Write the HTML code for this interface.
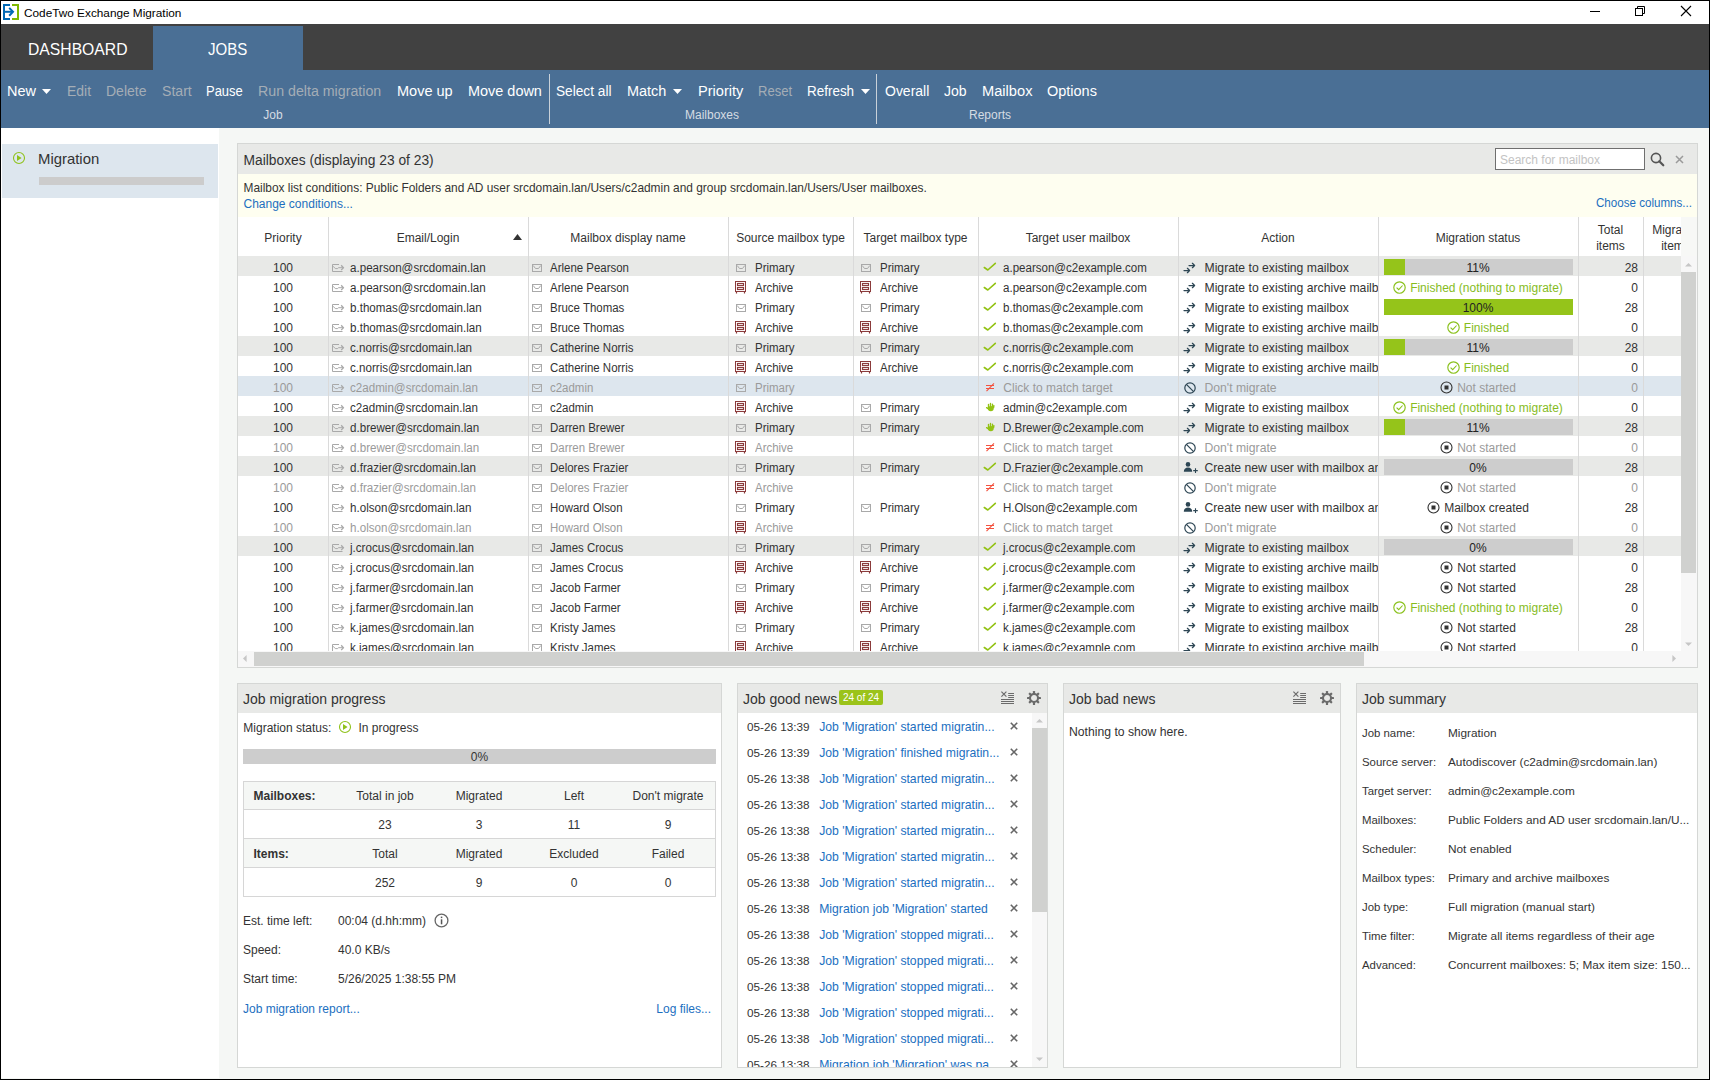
<!DOCTYPE html>
<html><head><meta charset="utf-8"><title>CodeTwo Exchange Migration</title>
<style>
html,body{margin:0;padding:0;width:1710px;height:1080px;overflow:hidden;background:#000}
body{position:relative;font-family:"Liberation Sans", sans-serif}
.r{position:absolute;display:block}
.t{position:absolute;white-space:nowrap;font-family:"Liberation Sans", sans-serif}
svg.r{overflow:visible}
</style></head><body>
<div class="r" style="left:0px;top:0px;width:1710px;height:1080px;background:#000;"></div><div class="r" style="left:1px;top:1px;width:1708px;height:1078px;background:#f5f7f5;"></div><div class="r" style="left:1px;top:1px;width:1708px;height:23px;background:#ffffff;"></div><svg class="r" style="left:0px;top:0px;" width="22" height="22" viewBox="0 0 22 22"><path d="M10 4H3V20H10V18H5V6H10Z" fill="#0068b4"/><path d="M5 11.8H12.6" stroke="#0068b4" stroke-width="2"/><path d="M9.2 7.9L13 11.8L9.2 15.7" stroke="#0068b4" stroke-width="2" fill="none"/><path d="M12 4H19V20H12V18H17V6H12Z" fill="#7fb800"/></svg><div class="t" style="left:24px;top:3px;font-size:11.8px;line-height:20px;color:#000;">CodeTwo Exchange Migration</div><div class="r" style="left:1590px;top:11px;width:10px;height:1px;background:#000;"></div><svg class="r" style="left:1634px;top:5px;" width="13" height="13" viewBox="0 0 13 13"><rect x="1.5" y="3.5" width="7" height="7" fill="none" stroke="#000"/><path d="M3.5 3.5V1.5H10.5V8.5H8.5" fill="none" stroke="#000"/></svg><svg class="r" style="left:1680px;top:5px;" width="12" height="12" viewBox="0 0 12 12"><path d="M1 1L11 11M11 1L1 11" stroke="#000" stroke-width="1.1"/></svg><div class="r" style="left:1px;top:24px;width:1708px;height:46px;background:#414141;"></div><div class="t" style="left:28.2px;top:39px;font-size:16.5px;line-height:20px;color:#ffffff;transform:scaleX(0.9519);transform-origin:0 0">DASHBOARD</div><div class="r" style="left:153px;top:26px;width:150px;height:44px;background:#4a6f95;"></div><div class="t" style="left:208px;top:39px;font-size:16.5px;line-height:20px;color:#ffffff;transform:scaleX(0.9116);transform-origin:0 0">JOBS</div><div class="r" style="left:1px;top:70px;width:1708px;height:58px;background:#4a6f95;"></div><div class="t" style="left:6.5px;top:81px;font-size:14px;line-height:20px;color:#ffffff;transform:scaleX(1.0351);transform-origin:0 0">New</div><div class="t" style="left:66.5px;top:81px;font-size:14px;line-height:20px;color:#a4adb6;transform:scaleX(0.9948);transform-origin:0 0">Edit</div><div class="t" style="left:106px;top:81px;font-size:14px;line-height:20px;color:#a4adb6;transform:scaleX(1.0008);transform-origin:0 0">Delete</div><div class="t" style="left:161.5px;top:81px;font-size:14px;line-height:20px;color:#a4adb6;transform:scaleX(1.0075);transform-origin:0 0">Start</div><div class="t" style="left:206px;top:81px;font-size:14px;line-height:20px;color:#ffffff;transform:scaleX(0.9269);transform-origin:0 0">Pause</div><div class="t" style="left:258px;top:81px;font-size:14px;line-height:20px;color:#a4adb6;transform:scaleX(1.0148);transform-origin:0 0">Run delta migration</div><div class="t" style="left:396.5px;top:81px;font-size:14px;line-height:20px;color:#ffffff;transform:scaleX(1.0372);transform-origin:0 0">Move up</div><div class="t" style="left:467.5px;top:81px;font-size:14px;line-height:20px;color:#ffffff;transform:scaleX(1.0322);transform-origin:0 0">Move down</div><div class="t" style="left:556.2px;top:81px;font-size:14px;line-height:20px;color:#ffffff;transform:scaleX(0.9769);transform-origin:0 0">Select all</div><div class="t" style="left:626.7px;top:81px;font-size:14px;line-height:20px;color:#ffffff;transform:scaleX(1.0334);transform-origin:0 0">Match</div><div class="t" style="left:697.6px;top:81px;font-size:14px;line-height:20px;color:#ffffff;transform:scaleX(1.0422);transform-origin:0 0">Priority</div><div class="t" style="left:757.6px;top:81px;font-size:14px;line-height:20px;color:#a4adb6;transform:scaleX(0.9323);transform-origin:0 0">Reset</div><div class="t" style="left:806.7px;top:81px;font-size:14px;line-height:20px;color:#ffffff;transform:scaleX(0.9606);transform-origin:0 0">Refresh</div><div class="t" style="left:884.6px;top:81px;font-size:14px;line-height:20px;color:#ffffff;transform:scaleX(0.9987);transform-origin:0 0">Overall</div><div class="t" style="left:943.7px;top:81px;font-size:14px;line-height:20px;color:#ffffff;transform:scaleX(1.0010);transform-origin:0 0">Job</div><div class="t" style="left:981.6px;top:81px;font-size:14px;line-height:20px;color:#ffffff;transform:scaleX(1.0466);transform-origin:0 0">Mailbox</div><div class="t" style="left:1046.9px;top:81px;font-size:14px;line-height:20px;color:#ffffff;transform:scaleX(1.0342);transform-origin:0 0">Options</div><svg class="r" style="left:42px;top:89px;" width="9" height="5" viewBox="0 0 9 5"><path d="M0 0h9L4.5 5z" fill="#fff"/></svg><svg class="r" style="left:673px;top:89px;" width="9" height="5" viewBox="0 0 9 5"><path d="M0 0h9L4.5 5z" fill="#fff"/></svg><svg class="r" style="left:861px;top:89px;" width="9" height="5" viewBox="0 0 9 5"><path d="M0 0h9L4.5 5z" fill="#fff"/></svg><div class="r" style="left:549px;top:74px;width:1px;height:50px;background:#c9d1d9;"></div><div class="r" style="left:876px;top:74px;width:1px;height:50px;background:#c9d1d9;"></div><div class="t" style="left:233px;top:105px;font-size:12px;line-height:20px;color:#d5dce3;width:80px;text-align:center;">Job</div><div class="t" style="left:662px;top:105px;font-size:12px;line-height:20px;color:#d5dce3;width:100px;text-align:center;">Mailboxes</div><div class="t" style="left:940px;top:105px;font-size:12px;line-height:20px;color:#d5dce3;width:100px;text-align:center;">Reports</div><div class="r" style="left:1px;top:128px;width:218px;height:950px;background:#ffffff;"></div><div class="r" style="left:2px;top:144px;width:216px;height:54px;background:#dde6ee;"></div><svg class="r" style="left:12px;top:151px;" width="14" height="14" viewBox="0 0 14 14"><circle cx="7" cy="7" r="5.5" fill="none" stroke="#8fc21b" stroke-width="1.1"/><path d="M5 3.9V9.9L9.6 6.9z" fill="#8fc21b"/></svg><div class="t" style="left:37.5px;top:149px;font-size:14.5px;line-height:20px;color:#333333;transform:scaleX(1.0261);transform-origin:0 0">Migration</div><div class="r" style="left:39px;top:177px;width:165px;height:8px;background:#cccccc;"></div><div class="r" style="left:237px;top:143px;width:1461px;height:525px;background:#d5d7d5;"></div><div class="r" style="left:238px;top:144px;width:1459px;height:523px;background:#ffffff;"></div><div class="r" style="left:238px;top:144px;width:1459px;height:30px;background:#e8e9e7;"></div><div class="t" style="left:243.5px;top:151px;font-size:13.8px;line-height:20px;color:#333333;">Mailboxes (displaying 23 of 23)</div><div class="r" style="left:1495px;top:148px;width:150px;height:22px;background:#6f6f6f;"></div><div class="r" style="left:1496px;top:149px;width:148px;height:20px;background:#ffffff;"></div><div class="t" style="left:1500px;top:150px;font-size:12px;line-height:20px;color:#c3c3c3;">Search for mailbox</div><svg class="r" style="left:1650px;top:152px;" width="15" height="15" viewBox="0 0 15 15"><circle cx="6" cy="6" r="4.6" fill="none" stroke="#555" stroke-width="1.6"/><path d="M9.3 9.3l4 4" stroke="#555" stroke-width="2.2" stroke-linecap="round"/></svg><svg class="r" style="left:1675px;top:155px;" width="9" height="9" viewBox="0 0 9 9"><path d="M1 1l7 7M8 1L1 8" stroke="#9a9a9a" stroke-width="1.5"/></svg><div class="r" style="left:238px;top:174px;width:1459px;height:43px;background:#fefef0;"></div><div class="t" style="left:243.5px;top:178px;font-size:11.9px;line-height:20px;color:#333333;">Mailbox list conditions: Public Folders and AD user srcdomain.lan/Users/c2admin and group srcdomain.lan/Users/User mailboxes.</div><div class="t" style="left:243.5px;top:194px;font-size:12px;line-height:20px;color:#1c6fbf;">Change conditions...</div><div class="t" style="left:1595.5px;top:193px;font-size:12px;line-height:20px;color:#1c6fbf;transform:scaleX(0.9659);transform-origin:0 0">Choose columns...</div><div class="r" style="left:238px;top:217px;width:1443px;height:434px;overflow:hidden"><div class="r" style="left:0px;top:0px;width:1443px;height:39px;background:#ffffff;"></div><div class="t" style="left:0px;top:11px;font-size:12px;line-height:20px;color:#333333;width:90px;text-align:center;">Priority</div><div class="t" style="left:90px;top:11px;font-size:12px;line-height:20px;color:#333333;width:200px;text-align:center;">Email/Login</div><div class="t" style="left:290px;top:11px;font-size:12px;line-height:20px;color:#333333;width:200px;text-align:center;">Mailbox display name</div><div class="t" style="left:490px;top:11px;font-size:12px;line-height:20px;color:#333333;width:125px;text-align:center;">Source mailbox type</div><div class="t" style="left:615px;top:11px;font-size:12px;line-height:20px;color:#333333;width:125px;text-align:center;">Target mailbox type</div><div class="t" style="left:740px;top:11px;font-size:12px;line-height:20px;color:#333333;width:200px;text-align:center;">Target user mailbox</div><div class="t" style="left:940px;top:11px;font-size:12px;line-height:20px;color:#333333;width:200px;text-align:center;">Action</div><div class="t" style="left:1140px;top:11px;font-size:12px;line-height:20px;color:#333333;width:200px;text-align:center;">Migration status</div><div class="t" style="left:1340px;top:3px;font-size:12px;line-height:20px;color:#333333;width:65px;text-align:center;">Total</div><div class="t" style="left:1340px;top:19px;font-size:12px;line-height:20px;color:#333333;width:65px;text-align:center;">items</div><div class="t" style="left:1405px;top:3px;font-size:12px;line-height:20px;color:#333333;width:65px;text-align:center;">Migrated</div><div class="t" style="left:1405px;top:19px;font-size:12px;line-height:20px;color:#333333;width:65px;text-align:center;">items</div><svg class="r" style="left:275px;top:17px;" width="9" height="6" viewBox="0 0 9 6"><path d="M0 6h9L4.5 0z" fill="#333"/></svg><div class="r" style="left:0px;top:39px;width:1443px;height:20px;background:#e8e9e7;"></div><div class="t" style="left:0px;top:41px;font-size:12px;line-height:20px;color:#333333;width:90px;text-align:center;">100</div><svg class="r" style="left:94px;top:47px;" width="13" height="9" viewBox="0 0 13 9"><path d="M7 0.5H0.5v7h10" fill="none" stroke="#a9a9a9"/><path d="M1 2.2l2.3 2.4h2.3l0.8-0.9h5" fill="none" stroke="#a9a9a9"/><path d="M9.2 1.3l2.2 2.4-2.2 2.4" fill="none" stroke="#a9a9a9" stroke-width="1.3"/></svg><div class="t" style="left:112px;top:41px;font-size:12px;line-height:20px;color:#333333;transform:scaleX(0.967);transform-origin:0 0;">a.pearson@srcdomain.lan</div><svg class="r" style="left:294px;top:47px;" width="11" height="9" viewBox="0 0 11 9"><rect x="0.5" y="0.5" width="9" height="7" fill="none" stroke="#a9a9a9"/><path d="M1.2 1.5L3.5 4.5H6.5L8.8 1.5" fill="none" stroke="#a9a9a9"/></svg><div class="t" style="left:312px;top:41px;font-size:12px;line-height:20px;color:#333333;transform:scaleX(0.955);transform-origin:0 0;">Arlene Pearson</div><svg class="r" style="left:498px;top:47px;" width="11" height="9" viewBox="0 0 11 9"><rect x="0.5" y="0.5" width="9" height="7" fill="none" stroke="#a9a9a9"/><path d="M1.2 1.5L3.5 4.5H6.5L8.8 1.5" fill="none" stroke="#a9a9a9"/></svg><div class="t" style="left:516.5px;top:41px;font-size:12px;line-height:20px;color:#333333;transform:scaleX(0.955);transform-origin:0 0;">Primary</div><svg class="r" style="left:623px;top:47px;" width="11" height="9" viewBox="0 0 11 9"><rect x="0.5" y="0.5" width="9" height="7" fill="none" stroke="#a9a9a9"/><path d="M1.2 1.5L3.5 4.5H6.5L8.8 1.5" fill="none" stroke="#a9a9a9"/></svg><div class="t" style="left:641.5px;top:41px;font-size:12px;line-height:20px;color:#333333;transform:scaleX(0.955);transform-origin:0 0;">Primary</div><svg class="r" style="left:745px;top:45px;" width="14" height="10" viewBox="0 0 14 10"><path d="M1.3 5.5L4.8 8L12.3 1.3" fill="none" stroke="#92c213" stroke-width="1.6" stroke-linecap="round" stroke-linejoin="round"/></svg><div class="t" style="left:765.3px;top:41px;font-size:12px;line-height:20px;color:#333333;transform:scaleX(0.962);transform-origin:0 0;">a.pearson@c2example.com</div><div class="r" style="left:940px;top:39px;width:200px;height:20px;overflow:hidden"><svg class="r" style="left:5px;top:6px;" width="13" height="12" viewBox="0 0 13 12"><path d="M6 3.5H11.6M9.4 1.3L11.6 3.5L9.4 5.7M1 8.5H6.6M4.4 6.3L6.6 8.5L4.4 10.7" fill="none" stroke="#2d4654" stroke-width="1.25" stroke-linecap="round" stroke-linejoin="round"/></svg><div class="t" style="left:26.5px;top:2px;font-size:12.2px;line-height:20px;color:#333333;white-space:nowrap;">Migrate to existing mailbox</div></div><div class="r" style="left:1146px;top:42px;width:189px;height:16px;background:#cdcdcd;"></div><div class="r" style="left:1146px;top:42px;width:21px;height:16px;background:#95c41a;"></div><div class="t" style="left:1140px;top:41px;font-size:12px;line-height:20px;color:#222;width:200px;text-align:center;">11%</div><div class="t" style="left:1340px;top:41px;font-size:12px;line-height:20px;color:#333333;width:60px;text-align:right;">28</div><div class="t" style="left:0px;top:61px;font-size:12px;line-height:20px;color:#333333;width:90px;text-align:center;">100</div><svg class="r" style="left:94px;top:67px;" width="13" height="9" viewBox="0 0 13 9"><path d="M7 0.5H0.5v7h10" fill="none" stroke="#a9a9a9"/><path d="M1 2.2l2.3 2.4h2.3l0.8-0.9h5" fill="none" stroke="#a9a9a9"/><path d="M9.2 1.3l2.2 2.4-2.2 2.4" fill="none" stroke="#a9a9a9" stroke-width="1.3"/></svg><div class="t" style="left:112px;top:61px;font-size:12px;line-height:20px;color:#333333;transform:scaleX(0.967);transform-origin:0 0;">a.pearson@srcdomain.lan</div><svg class="r" style="left:294px;top:67px;" width="11" height="9" viewBox="0 0 11 9"><rect x="0.5" y="0.5" width="9" height="7" fill="none" stroke="#a9a9a9"/><path d="M1.2 1.5L3.5 4.5H6.5L8.8 1.5" fill="none" stroke="#a9a9a9"/></svg><div class="t" style="left:312px;top:61px;font-size:12px;line-height:20px;color:#333333;transform:scaleX(0.955);transform-origin:0 0;">Arlene Pearson</div><svg class="r" style="left:497px;top:64px;" width="11" height="13" viewBox="0 0 11 13"><rect x="0.5" y="0.5" width="10" height="10" fill="none" stroke="#8b3b3b" stroke-width="1"/><rect x="2.5" y="2.5" width="6" height="2" fill="none" stroke="#8b3b3b" stroke-width="1.15"/><rect x="2.5" y="6.5" width="6" height="2" fill="none" stroke="#8b3b3b" stroke-width="1.15"/><path d="M1.5 11V12.6M9.5 11V12.6" stroke="#8b3b3b" stroke-width="1.2"/></svg><div class="t" style="left:516.5px;top:61px;font-size:12px;line-height:20px;color:#333333;transform:scaleX(0.955);transform-origin:0 0;">Archive</div><svg class="r" style="left:622px;top:64px;" width="11" height="13" viewBox="0 0 11 13"><rect x="0.5" y="0.5" width="10" height="10" fill="none" stroke="#8b3b3b" stroke-width="1"/><rect x="2.5" y="2.5" width="6" height="2" fill="none" stroke="#8b3b3b" stroke-width="1.15"/><rect x="2.5" y="6.5" width="6" height="2" fill="none" stroke="#8b3b3b" stroke-width="1.15"/><path d="M1.5 11V12.6M9.5 11V12.6" stroke="#8b3b3b" stroke-width="1.2"/></svg><div class="t" style="left:641.5px;top:61px;font-size:12px;line-height:20px;color:#333333;transform:scaleX(0.955);transform-origin:0 0;">Archive</div><svg class="r" style="left:745px;top:65px;" width="14" height="10" viewBox="0 0 14 10"><path d="M1.3 5.5L4.8 8L12.3 1.3" fill="none" stroke="#92c213" stroke-width="1.6" stroke-linecap="round" stroke-linejoin="round"/></svg><div class="t" style="left:765.3px;top:61px;font-size:12px;line-height:20px;color:#333333;transform:scaleX(0.962);transform-origin:0 0;">a.pearson@c2example.com</div><div class="r" style="left:940px;top:59px;width:200px;height:20px;overflow:hidden"><svg class="r" style="left:5px;top:6px;" width="13" height="12" viewBox="0 0 13 12"><path d="M6 3.5H11.6M9.4 1.3L11.6 3.5L9.4 5.7M1 8.5H6.6M4.4 6.3L6.6 8.5L4.4 10.7" fill="none" stroke="#2d4654" stroke-width="1.25" stroke-linecap="round" stroke-linejoin="round"/></svg><div class="t" style="left:26.5px;top:2px;font-size:12.2px;line-height:20px;color:#333333;white-space:nowrap;">Migrate to existing archive mailb</div></div><div class="r" style="left:1140px;top:59px;width:200px;height:20px;display:flex;justify-content:center;align-items:center"><svg width="13" height="13" viewBox="0 0 13 13" style="margin-right:4px;margin-top:2px"><circle cx="6.5" cy="6.5" r="5.7" fill="none" stroke="#8ac11d" stroke-width="1.15"/><path d="M3.6 6.6l2.1 2.1 3.9-4.2" fill="none" stroke="#8ac11d" stroke-width="1.1"/></svg><span style="font-size:12px;color:#86bc1e;line-height:20px;padding-top:4px">Finished (nothing to migrate)</span></div><div class="t" style="left:1340px;top:61px;font-size:12px;line-height:20px;color:#333333;width:60px;text-align:right;">0</div><div class="t" style="left:0px;top:81px;font-size:12px;line-height:20px;color:#333333;width:90px;text-align:center;">100</div><svg class="r" style="left:94px;top:87px;" width="13" height="9" viewBox="0 0 13 9"><path d="M7 0.5H0.5v7h10" fill="none" stroke="#a9a9a9"/><path d="M1 2.2l2.3 2.4h2.3l0.8-0.9h5" fill="none" stroke="#a9a9a9"/><path d="M9.2 1.3l2.2 2.4-2.2 2.4" fill="none" stroke="#a9a9a9" stroke-width="1.3"/></svg><div class="t" style="left:112px;top:81px;font-size:12px;line-height:20px;color:#333333;transform:scaleX(0.967);transform-origin:0 0;">b.thomas@srcdomain.lan</div><svg class="r" style="left:294px;top:87px;" width="11" height="9" viewBox="0 0 11 9"><rect x="0.5" y="0.5" width="9" height="7" fill="none" stroke="#a9a9a9"/><path d="M1.2 1.5L3.5 4.5H6.5L8.8 1.5" fill="none" stroke="#a9a9a9"/></svg><div class="t" style="left:312px;top:81px;font-size:12px;line-height:20px;color:#333333;transform:scaleX(0.955);transform-origin:0 0;">Bruce Thomas</div><svg class="r" style="left:498px;top:87px;" width="11" height="9" viewBox="0 0 11 9"><rect x="0.5" y="0.5" width="9" height="7" fill="none" stroke="#a9a9a9"/><path d="M1.2 1.5L3.5 4.5H6.5L8.8 1.5" fill="none" stroke="#a9a9a9"/></svg><div class="t" style="left:516.5px;top:81px;font-size:12px;line-height:20px;color:#333333;transform:scaleX(0.955);transform-origin:0 0;">Primary</div><svg class="r" style="left:623px;top:87px;" width="11" height="9" viewBox="0 0 11 9"><rect x="0.5" y="0.5" width="9" height="7" fill="none" stroke="#a9a9a9"/><path d="M1.2 1.5L3.5 4.5H6.5L8.8 1.5" fill="none" stroke="#a9a9a9"/></svg><div class="t" style="left:641.5px;top:81px;font-size:12px;line-height:20px;color:#333333;transform:scaleX(0.955);transform-origin:0 0;">Primary</div><svg class="r" style="left:745px;top:85px;" width="14" height="10" viewBox="0 0 14 10"><path d="M1.3 5.5L4.8 8L12.3 1.3" fill="none" stroke="#92c213" stroke-width="1.6" stroke-linecap="round" stroke-linejoin="round"/></svg><div class="t" style="left:765.3px;top:81px;font-size:12px;line-height:20px;color:#333333;transform:scaleX(0.962);transform-origin:0 0;">b.thomas@c2example.com</div><div class="r" style="left:940px;top:79px;width:200px;height:20px;overflow:hidden"><svg class="r" style="left:5px;top:6px;" width="13" height="12" viewBox="0 0 13 12"><path d="M6 3.5H11.6M9.4 1.3L11.6 3.5L9.4 5.7M1 8.5H6.6M4.4 6.3L6.6 8.5L4.4 10.7" fill="none" stroke="#2d4654" stroke-width="1.25" stroke-linecap="round" stroke-linejoin="round"/></svg><div class="t" style="left:26.5px;top:2px;font-size:12.2px;line-height:20px;color:#333333;white-space:nowrap;">Migrate to existing mailbox</div></div><div class="r" style="left:1146px;top:82px;width:189px;height:16px;background:#cdcdcd;"></div><div class="r" style="left:1146px;top:82px;width:189px;height:16px;background:#95c41a;"></div><div class="t" style="left:1140px;top:81px;font-size:12px;line-height:20px;color:#222;width:200px;text-align:center;">100%</div><div class="t" style="left:1340px;top:81px;font-size:12px;line-height:20px;color:#333333;width:60px;text-align:right;">28</div><div class="t" style="left:0px;top:101px;font-size:12px;line-height:20px;color:#333333;width:90px;text-align:center;">100</div><svg class="r" style="left:94px;top:107px;" width="13" height="9" viewBox="0 0 13 9"><path d="M7 0.5H0.5v7h10" fill="none" stroke="#a9a9a9"/><path d="M1 2.2l2.3 2.4h2.3l0.8-0.9h5" fill="none" stroke="#a9a9a9"/><path d="M9.2 1.3l2.2 2.4-2.2 2.4" fill="none" stroke="#a9a9a9" stroke-width="1.3"/></svg><div class="t" style="left:112px;top:101px;font-size:12px;line-height:20px;color:#333333;transform:scaleX(0.967);transform-origin:0 0;">b.thomas@srcdomain.lan</div><svg class="r" style="left:294px;top:107px;" width="11" height="9" viewBox="0 0 11 9"><rect x="0.5" y="0.5" width="9" height="7" fill="none" stroke="#a9a9a9"/><path d="M1.2 1.5L3.5 4.5H6.5L8.8 1.5" fill="none" stroke="#a9a9a9"/></svg><div class="t" style="left:312px;top:101px;font-size:12px;line-height:20px;color:#333333;transform:scaleX(0.955);transform-origin:0 0;">Bruce Thomas</div><svg class="r" style="left:497px;top:104px;" width="11" height="13" viewBox="0 0 11 13"><rect x="0.5" y="0.5" width="10" height="10" fill="none" stroke="#8b3b3b" stroke-width="1"/><rect x="2.5" y="2.5" width="6" height="2" fill="none" stroke="#8b3b3b" stroke-width="1.15"/><rect x="2.5" y="6.5" width="6" height="2" fill="none" stroke="#8b3b3b" stroke-width="1.15"/><path d="M1.5 11V12.6M9.5 11V12.6" stroke="#8b3b3b" stroke-width="1.2"/></svg><div class="t" style="left:516.5px;top:101px;font-size:12px;line-height:20px;color:#333333;transform:scaleX(0.955);transform-origin:0 0;">Archive</div><svg class="r" style="left:622px;top:104px;" width="11" height="13" viewBox="0 0 11 13"><rect x="0.5" y="0.5" width="10" height="10" fill="none" stroke="#8b3b3b" stroke-width="1"/><rect x="2.5" y="2.5" width="6" height="2" fill="none" stroke="#8b3b3b" stroke-width="1.15"/><rect x="2.5" y="6.5" width="6" height="2" fill="none" stroke="#8b3b3b" stroke-width="1.15"/><path d="M1.5 11V12.6M9.5 11V12.6" stroke="#8b3b3b" stroke-width="1.2"/></svg><div class="t" style="left:641.5px;top:101px;font-size:12px;line-height:20px;color:#333333;transform:scaleX(0.955);transform-origin:0 0;">Archive</div><svg class="r" style="left:745px;top:105px;" width="14" height="10" viewBox="0 0 14 10"><path d="M1.3 5.5L4.8 8L12.3 1.3" fill="none" stroke="#92c213" stroke-width="1.6" stroke-linecap="round" stroke-linejoin="round"/></svg><div class="t" style="left:765.3px;top:101px;font-size:12px;line-height:20px;color:#333333;transform:scaleX(0.962);transform-origin:0 0;">b.thomas@c2example.com</div><div class="r" style="left:940px;top:99px;width:200px;height:20px;overflow:hidden"><svg class="r" style="left:5px;top:6px;" width="13" height="12" viewBox="0 0 13 12"><path d="M6 3.5H11.6M9.4 1.3L11.6 3.5L9.4 5.7M1 8.5H6.6M4.4 6.3L6.6 8.5L4.4 10.7" fill="none" stroke="#2d4654" stroke-width="1.25" stroke-linecap="round" stroke-linejoin="round"/></svg><div class="t" style="left:26.5px;top:2px;font-size:12.2px;line-height:20px;color:#333333;white-space:nowrap;">Migrate to existing archive mailb</div></div><div class="r" style="left:1140px;top:99px;width:200px;height:20px;display:flex;justify-content:center;align-items:center"><svg width="13" height="13" viewBox="0 0 13 13" style="margin-right:4px;margin-top:2px"><circle cx="6.5" cy="6.5" r="5.7" fill="none" stroke="#8ac11d" stroke-width="1.15"/><path d="M3.6 6.6l2.1 2.1 3.9-4.2" fill="none" stroke="#8ac11d" stroke-width="1.1"/></svg><span style="font-size:12px;color:#86bc1e;line-height:20px;padding-top:4px">Finished</span></div><div class="t" style="left:1340px;top:101px;font-size:12px;line-height:20px;color:#333333;width:60px;text-align:right;">0</div><div class="r" style="left:0px;top:119px;width:1443px;height:20px;background:#e8e9e7;"></div><div class="t" style="left:0px;top:121px;font-size:12px;line-height:20px;color:#333333;width:90px;text-align:center;">100</div><svg class="r" style="left:94px;top:127px;" width="13" height="9" viewBox="0 0 13 9"><path d="M7 0.5H0.5v7h10" fill="none" stroke="#a9a9a9"/><path d="M1 2.2l2.3 2.4h2.3l0.8-0.9h5" fill="none" stroke="#a9a9a9"/><path d="M9.2 1.3l2.2 2.4-2.2 2.4" fill="none" stroke="#a9a9a9" stroke-width="1.3"/></svg><div class="t" style="left:112px;top:121px;font-size:12px;line-height:20px;color:#333333;transform:scaleX(0.967);transform-origin:0 0;">c.norris@srcdomain.lan</div><svg class="r" style="left:294px;top:127px;" width="11" height="9" viewBox="0 0 11 9"><rect x="0.5" y="0.5" width="9" height="7" fill="none" stroke="#a9a9a9"/><path d="M1.2 1.5L3.5 4.5H6.5L8.8 1.5" fill="none" stroke="#a9a9a9"/></svg><div class="t" style="left:312px;top:121px;font-size:12px;line-height:20px;color:#333333;transform:scaleX(0.955);transform-origin:0 0;">Catherine Norris</div><svg class="r" style="left:498px;top:127px;" width="11" height="9" viewBox="0 0 11 9"><rect x="0.5" y="0.5" width="9" height="7" fill="none" stroke="#a9a9a9"/><path d="M1.2 1.5L3.5 4.5H6.5L8.8 1.5" fill="none" stroke="#a9a9a9"/></svg><div class="t" style="left:516.5px;top:121px;font-size:12px;line-height:20px;color:#333333;transform:scaleX(0.955);transform-origin:0 0;">Primary</div><svg class="r" style="left:623px;top:127px;" width="11" height="9" viewBox="0 0 11 9"><rect x="0.5" y="0.5" width="9" height="7" fill="none" stroke="#a9a9a9"/><path d="M1.2 1.5L3.5 4.5H6.5L8.8 1.5" fill="none" stroke="#a9a9a9"/></svg><div class="t" style="left:641.5px;top:121px;font-size:12px;line-height:20px;color:#333333;transform:scaleX(0.955);transform-origin:0 0;">Primary</div><svg class="r" style="left:745px;top:125px;" width="14" height="10" viewBox="0 0 14 10"><path d="M1.3 5.5L4.8 8L12.3 1.3" fill="none" stroke="#92c213" stroke-width="1.6" stroke-linecap="round" stroke-linejoin="round"/></svg><div class="t" style="left:765.3px;top:121px;font-size:12px;line-height:20px;color:#333333;transform:scaleX(0.962);transform-origin:0 0;">c.norris@c2example.com</div><div class="r" style="left:940px;top:119px;width:200px;height:20px;overflow:hidden"><svg class="r" style="left:5px;top:6px;" width="13" height="12" viewBox="0 0 13 12"><path d="M6 3.5H11.6M9.4 1.3L11.6 3.5L9.4 5.7M1 8.5H6.6M4.4 6.3L6.6 8.5L4.4 10.7" fill="none" stroke="#2d4654" stroke-width="1.25" stroke-linecap="round" stroke-linejoin="round"/></svg><div class="t" style="left:26.5px;top:2px;font-size:12.2px;line-height:20px;color:#333333;white-space:nowrap;">Migrate to existing mailbox</div></div><div class="r" style="left:1146px;top:122px;width:189px;height:16px;background:#cdcdcd;"></div><div class="r" style="left:1146px;top:122px;width:21px;height:16px;background:#95c41a;"></div><div class="t" style="left:1140px;top:121px;font-size:12px;line-height:20px;color:#222;width:200px;text-align:center;">11%</div><div class="t" style="left:1340px;top:121px;font-size:12px;line-height:20px;color:#333333;width:60px;text-align:right;">28</div><div class="t" style="left:0px;top:141px;font-size:12px;line-height:20px;color:#333333;width:90px;text-align:center;">100</div><svg class="r" style="left:94px;top:147px;" width="13" height="9" viewBox="0 0 13 9"><path d="M7 0.5H0.5v7h10" fill="none" stroke="#a9a9a9"/><path d="M1 2.2l2.3 2.4h2.3l0.8-0.9h5" fill="none" stroke="#a9a9a9"/><path d="M9.2 1.3l2.2 2.4-2.2 2.4" fill="none" stroke="#a9a9a9" stroke-width="1.3"/></svg><div class="t" style="left:112px;top:141px;font-size:12px;line-height:20px;color:#333333;transform:scaleX(0.967);transform-origin:0 0;">c.norris@srcdomain.lan</div><svg class="r" style="left:294px;top:147px;" width="11" height="9" viewBox="0 0 11 9"><rect x="0.5" y="0.5" width="9" height="7" fill="none" stroke="#a9a9a9"/><path d="M1.2 1.5L3.5 4.5H6.5L8.8 1.5" fill="none" stroke="#a9a9a9"/></svg><div class="t" style="left:312px;top:141px;font-size:12px;line-height:20px;color:#333333;transform:scaleX(0.955);transform-origin:0 0;">Catherine Norris</div><svg class="r" style="left:497px;top:144px;" width="11" height="13" viewBox="0 0 11 13"><rect x="0.5" y="0.5" width="10" height="10" fill="none" stroke="#8b3b3b" stroke-width="1"/><rect x="2.5" y="2.5" width="6" height="2" fill="none" stroke="#8b3b3b" stroke-width="1.15"/><rect x="2.5" y="6.5" width="6" height="2" fill="none" stroke="#8b3b3b" stroke-width="1.15"/><path d="M1.5 11V12.6M9.5 11V12.6" stroke="#8b3b3b" stroke-width="1.2"/></svg><div class="t" style="left:516.5px;top:141px;font-size:12px;line-height:20px;color:#333333;transform:scaleX(0.955);transform-origin:0 0;">Archive</div><svg class="r" style="left:622px;top:144px;" width="11" height="13" viewBox="0 0 11 13"><rect x="0.5" y="0.5" width="10" height="10" fill="none" stroke="#8b3b3b" stroke-width="1"/><rect x="2.5" y="2.5" width="6" height="2" fill="none" stroke="#8b3b3b" stroke-width="1.15"/><rect x="2.5" y="6.5" width="6" height="2" fill="none" stroke="#8b3b3b" stroke-width="1.15"/><path d="M1.5 11V12.6M9.5 11V12.6" stroke="#8b3b3b" stroke-width="1.2"/></svg><div class="t" style="left:641.5px;top:141px;font-size:12px;line-height:20px;color:#333333;transform:scaleX(0.955);transform-origin:0 0;">Archive</div><svg class="r" style="left:745px;top:145px;" width="14" height="10" viewBox="0 0 14 10"><path d="M1.3 5.5L4.8 8L12.3 1.3" fill="none" stroke="#92c213" stroke-width="1.6" stroke-linecap="round" stroke-linejoin="round"/></svg><div class="t" style="left:765.3px;top:141px;font-size:12px;line-height:20px;color:#333333;transform:scaleX(0.962);transform-origin:0 0;">c.norris@c2example.com</div><div class="r" style="left:940px;top:139px;width:200px;height:20px;overflow:hidden"><svg class="r" style="left:5px;top:6px;" width="13" height="12" viewBox="0 0 13 12"><path d="M6 3.5H11.6M9.4 1.3L11.6 3.5L9.4 5.7M1 8.5H6.6M4.4 6.3L6.6 8.5L4.4 10.7" fill="none" stroke="#2d4654" stroke-width="1.25" stroke-linecap="round" stroke-linejoin="round"/></svg><div class="t" style="left:26.5px;top:2px;font-size:12.2px;line-height:20px;color:#333333;white-space:nowrap;">Migrate to existing archive mailb</div></div><div class="r" style="left:1140px;top:139px;width:200px;height:20px;display:flex;justify-content:center;align-items:center"><svg width="13" height="13" viewBox="0 0 13 13" style="margin-right:4px;margin-top:2px"><circle cx="6.5" cy="6.5" r="5.7" fill="none" stroke="#8ac11d" stroke-width="1.15"/><path d="M3.6 6.6l2.1 2.1 3.9-4.2" fill="none" stroke="#8ac11d" stroke-width="1.1"/></svg><span style="font-size:12px;color:#86bc1e;line-height:20px;padding-top:4px">Finished</span></div><div class="t" style="left:1340px;top:141px;font-size:12px;line-height:20px;color:#333333;width:60px;text-align:right;">0</div><div class="r" style="left:0px;top:159px;width:1443px;height:20px;background:#dde6ee;"></div><div class="t" style="left:0px;top:161px;font-size:12px;line-height:20px;color:#9a9a9a;width:90px;text-align:center;">100</div><svg class="r" style="left:94px;top:167px;" width="13" height="9" viewBox="0 0 13 9"><path d="M7 0.5H0.5v7h10" fill="none" stroke="#a9a9a9"/><path d="M1 2.2l2.3 2.4h2.3l0.8-0.9h5" fill="none" stroke="#a9a9a9"/><path d="M9.2 1.3l2.2 2.4-2.2 2.4" fill="none" stroke="#a9a9a9" stroke-width="1.3"/></svg><div class="t" style="left:112px;top:161px;font-size:12px;line-height:20px;color:#9a9a9a;transform:scaleX(0.967);transform-origin:0 0;">c2admin@srcdomain.lan</div><svg class="r" style="left:294px;top:167px;" width="11" height="9" viewBox="0 0 11 9"><rect x="0.5" y="0.5" width="9" height="7" fill="none" stroke="#a9a9a9"/><path d="M1.2 1.5L3.5 4.5H6.5L8.8 1.5" fill="none" stroke="#a9a9a9"/></svg><div class="t" style="left:312px;top:161px;font-size:12px;line-height:20px;color:#9a9a9a;transform:scaleX(0.955);transform-origin:0 0;">c2admin</div><svg class="r" style="left:498px;top:167px;" width="11" height="9" viewBox="0 0 11 9"><rect x="0.5" y="0.5" width="9" height="7" fill="none" stroke="#a9a9a9"/><path d="M1.2 1.5L3.5 4.5H6.5L8.8 1.5" fill="none" stroke="#a9a9a9"/></svg><div class="t" style="left:516.5px;top:161px;font-size:12px;line-height:20px;color:#9a9a9a;transform:scaleX(0.955);transform-origin:0 0;">Primary</div><svg class="r" style="left:748px;top:166px;" width="10" height="9" viewBox="0 0 10 9"><path d="M0 2.5h8M0 5.5h8" stroke="#f3523f" stroke-width="1.1"/><path d="M8 0.3L0.5 8.2" stroke="#f3523f" stroke-width="1.1"/></svg><div class="t" style="left:765.3px;top:161px;font-size:12px;line-height:20px;color:#9a9a9a;">Click to match target</div><div class="r" style="left:940px;top:159px;width:200px;height:20px;overflow:hidden"><svg class="r" style="left:6px;top:6px;" width="13" height="13" viewBox="0 0 13 13"><circle cx="6" cy="6" r="5.2" fill="none" stroke="#2d4654" stroke-width="1.2"/><path d="M2.4 2.4l7.2 7.2" stroke="#2d4654" stroke-width="1.2"/></svg><div class="t" style="left:26.5px;top:2px;font-size:12.2px;line-height:20px;color:#9a9a9a;white-space:nowrap;">Don&#x27;t migrate</div></div><div class="r" style="left:1140px;top:159px;width:200px;height:20px;display:flex;justify-content:center;align-items:center"><svg width="13" height="13" viewBox="0 0 13 13" style="margin-right:4px;margin-top:2px"><circle cx="6.5" cy="6.5" r="5.5" fill="none" stroke="#333" stroke-width="1.1"/><rect x="4.5" y="4.5" width="4" height="4" fill="#333"/></svg><span style="font-size:12px;color:#9a9a9a;line-height:20px;padding-top:4px">Not started</span></div><div class="t" style="left:1340px;top:161px;font-size:12px;line-height:20px;color:#9a9a9a;width:60px;text-align:right;">0</div><div class="t" style="left:0px;top:181px;font-size:12px;line-height:20px;color:#333333;width:90px;text-align:center;">100</div><svg class="r" style="left:94px;top:187px;" width="13" height="9" viewBox="0 0 13 9"><path d="M7 0.5H0.5v7h10" fill="none" stroke="#a9a9a9"/><path d="M1 2.2l2.3 2.4h2.3l0.8-0.9h5" fill="none" stroke="#a9a9a9"/><path d="M9.2 1.3l2.2 2.4-2.2 2.4" fill="none" stroke="#a9a9a9" stroke-width="1.3"/></svg><div class="t" style="left:112px;top:181px;font-size:12px;line-height:20px;color:#333333;transform:scaleX(0.967);transform-origin:0 0;">c2admin@srcdomain.lan</div><svg class="r" style="left:294px;top:187px;" width="11" height="9" viewBox="0 0 11 9"><rect x="0.5" y="0.5" width="9" height="7" fill="none" stroke="#a9a9a9"/><path d="M1.2 1.5L3.5 4.5H6.5L8.8 1.5" fill="none" stroke="#a9a9a9"/></svg><div class="t" style="left:312px;top:181px;font-size:12px;line-height:20px;color:#333333;transform:scaleX(0.955);transform-origin:0 0;">c2admin</div><svg class="r" style="left:497px;top:184px;" width="11" height="13" viewBox="0 0 11 13"><rect x="0.5" y="0.5" width="10" height="10" fill="none" stroke="#8b3b3b" stroke-width="1"/><rect x="2.5" y="2.5" width="6" height="2" fill="none" stroke="#8b3b3b" stroke-width="1.15"/><rect x="2.5" y="6.5" width="6" height="2" fill="none" stroke="#8b3b3b" stroke-width="1.15"/><path d="M1.5 11V12.6M9.5 11V12.6" stroke="#8b3b3b" stroke-width="1.2"/></svg><div class="t" style="left:516.5px;top:181px;font-size:12px;line-height:20px;color:#333333;transform:scaleX(0.955);transform-origin:0 0;">Archive</div><svg class="r" style="left:623px;top:187px;" width="11" height="9" viewBox="0 0 11 9"><rect x="0.5" y="0.5" width="9" height="7" fill="none" stroke="#a9a9a9"/><path d="M1.2 1.5L3.5 4.5H6.5L8.8 1.5" fill="none" stroke="#a9a9a9"/></svg><div class="t" style="left:641.5px;top:181px;font-size:12px;line-height:20px;color:#333333;transform:scaleX(0.955);transform-origin:0 0;">Primary</div><svg class="r" style="left:747px;top:185px;" width="10" height="10" viewBox="0 0 10 10"><ellipse cx="5.8" cy="6.6" rx="2.9" ry="2.7" fill="#93c213"/><path d="M3.5 5.6V2.3M5.5 5V1.4M7.5 5V2.2M8.6 5.6L8.9 3.6M4.6 7.8L1.6 5.6" stroke="#93c213" stroke-width="1.35" stroke-linecap="round"/></svg><div class="t" style="left:765.3px;top:181px;font-size:12px;line-height:20px;color:#333333;transform:scaleX(0.962);transform-origin:0 0;">admin@c2example.com</div><div class="r" style="left:940px;top:179px;width:200px;height:20px;overflow:hidden"><svg class="r" style="left:5px;top:6px;" width="13" height="12" viewBox="0 0 13 12"><path d="M6 3.5H11.6M9.4 1.3L11.6 3.5L9.4 5.7M1 8.5H6.6M4.4 6.3L6.6 8.5L4.4 10.7" fill="none" stroke="#2d4654" stroke-width="1.25" stroke-linecap="round" stroke-linejoin="round"/></svg><div class="t" style="left:26.5px;top:2px;font-size:12.2px;line-height:20px;color:#333333;white-space:nowrap;">Migrate to existing mailbox</div></div><div class="r" style="left:1140px;top:179px;width:200px;height:20px;display:flex;justify-content:center;align-items:center"><svg width="13" height="13" viewBox="0 0 13 13" style="margin-right:4px;margin-top:2px"><circle cx="6.5" cy="6.5" r="5.7" fill="none" stroke="#8ac11d" stroke-width="1.15"/><path d="M3.6 6.6l2.1 2.1 3.9-4.2" fill="none" stroke="#8ac11d" stroke-width="1.1"/></svg><span style="font-size:12px;color:#86bc1e;line-height:20px;padding-top:4px">Finished (nothing to migrate)</span></div><div class="t" style="left:1340px;top:181px;font-size:12px;line-height:20px;color:#333333;width:60px;text-align:right;">0</div><div class="r" style="left:0px;top:199px;width:1443px;height:20px;background:#e8e9e7;"></div><div class="t" style="left:0px;top:201px;font-size:12px;line-height:20px;color:#333333;width:90px;text-align:center;">100</div><svg class="r" style="left:94px;top:207px;" width="13" height="9" viewBox="0 0 13 9"><path d="M7 0.5H0.5v7h10" fill="none" stroke="#a9a9a9"/><path d="M1 2.2l2.3 2.4h2.3l0.8-0.9h5" fill="none" stroke="#a9a9a9"/><path d="M9.2 1.3l2.2 2.4-2.2 2.4" fill="none" stroke="#a9a9a9" stroke-width="1.3"/></svg><div class="t" style="left:112px;top:201px;font-size:12px;line-height:20px;color:#333333;transform:scaleX(0.967);transform-origin:0 0;">d.brewer@srcdomain.lan</div><svg class="r" style="left:294px;top:207px;" width="11" height="9" viewBox="0 0 11 9"><rect x="0.5" y="0.5" width="9" height="7" fill="none" stroke="#a9a9a9"/><path d="M1.2 1.5L3.5 4.5H6.5L8.8 1.5" fill="none" stroke="#a9a9a9"/></svg><div class="t" style="left:312px;top:201px;font-size:12px;line-height:20px;color:#333333;transform:scaleX(0.955);transform-origin:0 0;">Darren Brewer</div><svg class="r" style="left:498px;top:207px;" width="11" height="9" viewBox="0 0 11 9"><rect x="0.5" y="0.5" width="9" height="7" fill="none" stroke="#a9a9a9"/><path d="M1.2 1.5L3.5 4.5H6.5L8.8 1.5" fill="none" stroke="#a9a9a9"/></svg><div class="t" style="left:516.5px;top:201px;font-size:12px;line-height:20px;color:#333333;transform:scaleX(0.955);transform-origin:0 0;">Primary</div><svg class="r" style="left:623px;top:207px;" width="11" height="9" viewBox="0 0 11 9"><rect x="0.5" y="0.5" width="9" height="7" fill="none" stroke="#a9a9a9"/><path d="M1.2 1.5L3.5 4.5H6.5L8.8 1.5" fill="none" stroke="#a9a9a9"/></svg><div class="t" style="left:641.5px;top:201px;font-size:12px;line-height:20px;color:#333333;transform:scaleX(0.955);transform-origin:0 0;">Primary</div><svg class="r" style="left:747px;top:205px;" width="10" height="10" viewBox="0 0 10 10"><ellipse cx="5.8" cy="6.6" rx="2.9" ry="2.7" fill="#93c213"/><path d="M3.5 5.6V2.3M5.5 5V1.4M7.5 5V2.2M8.6 5.6L8.9 3.6M4.6 7.8L1.6 5.6" stroke="#93c213" stroke-width="1.35" stroke-linecap="round"/></svg><div class="t" style="left:765.3px;top:201px;font-size:12px;line-height:20px;color:#333333;transform:scaleX(0.962);transform-origin:0 0;">D.Brewer@c2example.com</div><div class="r" style="left:940px;top:199px;width:200px;height:20px;overflow:hidden"><svg class="r" style="left:5px;top:6px;" width="13" height="12" viewBox="0 0 13 12"><path d="M6 3.5H11.6M9.4 1.3L11.6 3.5L9.4 5.7M1 8.5H6.6M4.4 6.3L6.6 8.5L4.4 10.7" fill="none" stroke="#2d4654" stroke-width="1.25" stroke-linecap="round" stroke-linejoin="round"/></svg><div class="t" style="left:26.5px;top:2px;font-size:12.2px;line-height:20px;color:#333333;white-space:nowrap;">Migrate to existing mailbox</div></div><div class="r" style="left:1146px;top:202px;width:189px;height:16px;background:#cdcdcd;"></div><div class="r" style="left:1146px;top:202px;width:21px;height:16px;background:#95c41a;"></div><div class="t" style="left:1140px;top:201px;font-size:12px;line-height:20px;color:#222;width:200px;text-align:center;">11%</div><div class="t" style="left:1340px;top:201px;font-size:12px;line-height:20px;color:#333333;width:60px;text-align:right;">28</div><div class="t" style="left:0px;top:221px;font-size:12px;line-height:20px;color:#9a9a9a;width:90px;text-align:center;">100</div><svg class="r" style="left:94px;top:227px;" width="13" height="9" viewBox="0 0 13 9"><path d="M7 0.5H0.5v7h10" fill="none" stroke="#a9a9a9"/><path d="M1 2.2l2.3 2.4h2.3l0.8-0.9h5" fill="none" stroke="#a9a9a9"/><path d="M9.2 1.3l2.2 2.4-2.2 2.4" fill="none" stroke="#a9a9a9" stroke-width="1.3"/></svg><div class="t" style="left:112px;top:221px;font-size:12px;line-height:20px;color:#9a9a9a;transform:scaleX(0.967);transform-origin:0 0;">d.brewer@srcdomain.lan</div><svg class="r" style="left:294px;top:227px;" width="11" height="9" viewBox="0 0 11 9"><rect x="0.5" y="0.5" width="9" height="7" fill="none" stroke="#a9a9a9"/><path d="M1.2 1.5L3.5 4.5H6.5L8.8 1.5" fill="none" stroke="#a9a9a9"/></svg><div class="t" style="left:312px;top:221px;font-size:12px;line-height:20px;color:#9a9a9a;transform:scaleX(0.955);transform-origin:0 0;">Darren Brewer</div><svg class="r" style="left:497px;top:224px;" width="11" height="13" viewBox="0 0 11 13"><rect x="0.5" y="0.5" width="10" height="10" fill="none" stroke="#8b3b3b" stroke-width="1"/><rect x="2.5" y="2.5" width="6" height="2" fill="none" stroke="#8b3b3b" stroke-width="1.15"/><rect x="2.5" y="6.5" width="6" height="2" fill="none" stroke="#8b3b3b" stroke-width="1.15"/><path d="M1.5 11V12.6M9.5 11V12.6" stroke="#8b3b3b" stroke-width="1.2"/></svg><div class="t" style="left:516.5px;top:221px;font-size:12px;line-height:20px;color:#9a9a9a;transform:scaleX(0.955);transform-origin:0 0;">Archive</div><svg class="r" style="left:748px;top:226px;" width="10" height="9" viewBox="0 0 10 9"><path d="M0 2.5h8M0 5.5h8" stroke="#f3523f" stroke-width="1.1"/><path d="M8 0.3L0.5 8.2" stroke="#f3523f" stroke-width="1.1"/></svg><div class="t" style="left:765.3px;top:221px;font-size:12px;line-height:20px;color:#9a9a9a;">Click to match target</div><div class="r" style="left:940px;top:219px;width:200px;height:20px;overflow:hidden"><svg class="r" style="left:6px;top:6px;" width="13" height="13" viewBox="0 0 13 13"><circle cx="6" cy="6" r="5.2" fill="none" stroke="#2d4654" stroke-width="1.2"/><path d="M2.4 2.4l7.2 7.2" stroke="#2d4654" stroke-width="1.2"/></svg><div class="t" style="left:26.5px;top:2px;font-size:12.2px;line-height:20px;color:#9a9a9a;white-space:nowrap;">Don&#x27;t migrate</div></div><div class="r" style="left:1140px;top:219px;width:200px;height:20px;display:flex;justify-content:center;align-items:center"><svg width="13" height="13" viewBox="0 0 13 13" style="margin-right:4px;margin-top:2px"><circle cx="6.5" cy="6.5" r="5.5" fill="none" stroke="#333" stroke-width="1.1"/><rect x="4.5" y="4.5" width="4" height="4" fill="#333"/></svg><span style="font-size:12px;color:#9a9a9a;line-height:20px;padding-top:4px">Not started</span></div><div class="t" style="left:1340px;top:221px;font-size:12px;line-height:20px;color:#9a9a9a;width:60px;text-align:right;">0</div><div class="r" style="left:0px;top:239px;width:1443px;height:20px;background:#e8e9e7;"></div><div class="t" style="left:0px;top:241px;font-size:12px;line-height:20px;color:#333333;width:90px;text-align:center;">100</div><svg class="r" style="left:94px;top:247px;" width="13" height="9" viewBox="0 0 13 9"><path d="M7 0.5H0.5v7h10" fill="none" stroke="#a9a9a9"/><path d="M1 2.2l2.3 2.4h2.3l0.8-0.9h5" fill="none" stroke="#a9a9a9"/><path d="M9.2 1.3l2.2 2.4-2.2 2.4" fill="none" stroke="#a9a9a9" stroke-width="1.3"/></svg><div class="t" style="left:112px;top:241px;font-size:12px;line-height:20px;color:#333333;transform:scaleX(0.967);transform-origin:0 0;">d.frazier@srcdomain.lan</div><svg class="r" style="left:294px;top:247px;" width="11" height="9" viewBox="0 0 11 9"><rect x="0.5" y="0.5" width="9" height="7" fill="none" stroke="#a9a9a9"/><path d="M1.2 1.5L3.5 4.5H6.5L8.8 1.5" fill="none" stroke="#a9a9a9"/></svg><div class="t" style="left:312px;top:241px;font-size:12px;line-height:20px;color:#333333;transform:scaleX(0.955);transform-origin:0 0;">Delores Frazier</div><svg class="r" style="left:498px;top:247px;" width="11" height="9" viewBox="0 0 11 9"><rect x="0.5" y="0.5" width="9" height="7" fill="none" stroke="#a9a9a9"/><path d="M1.2 1.5L3.5 4.5H6.5L8.8 1.5" fill="none" stroke="#a9a9a9"/></svg><div class="t" style="left:516.5px;top:241px;font-size:12px;line-height:20px;color:#333333;transform:scaleX(0.955);transform-origin:0 0;">Primary</div><svg class="r" style="left:623px;top:247px;" width="11" height="9" viewBox="0 0 11 9"><rect x="0.5" y="0.5" width="9" height="7" fill="none" stroke="#a9a9a9"/><path d="M1.2 1.5L3.5 4.5H6.5L8.8 1.5" fill="none" stroke="#a9a9a9"/></svg><div class="t" style="left:641.5px;top:241px;font-size:12px;line-height:20px;color:#333333;transform:scaleX(0.955);transform-origin:0 0;">Primary</div><svg class="r" style="left:745px;top:245px;" width="14" height="10" viewBox="0 0 14 10"><path d="M1.3 5.5L4.8 8L12.3 1.3" fill="none" stroke="#92c213" stroke-width="1.6" stroke-linecap="round" stroke-linejoin="round"/></svg><div class="t" style="left:765.3px;top:241px;font-size:12px;line-height:20px;color:#333333;transform:scaleX(0.962);transform-origin:0 0;">D.Frazier@c2example.com</div><div class="r" style="left:940px;top:239px;width:200px;height:20px;overflow:hidden"><svg class="r" style="left:5px;top:6px;" width="16" height="12" viewBox="0 0 16 12"><circle cx="5" cy="2.4" r="2.3" fill="#2d4654"/><path d="M0.8 9.8c0-2.7 1.6-4.3 4.2-4.3s4.2 1.6 4.2 4.3z" fill="#2d4654"/><path d="M10.2 8.6H14.8M12.5 6.3V10.9" stroke="#2d4654" stroke-width="1.1"/></svg><div class="t" style="left:26.5px;top:2px;font-size:12.2px;line-height:20px;color:#333333;white-space:nowrap;">Create new user with mailbox and</div></div><div class="r" style="left:1146px;top:242px;width:189px;height:16px;background:#cdcdcd;"></div><div class="t" style="left:1140px;top:241px;font-size:12px;line-height:20px;color:#222;width:200px;text-align:center;">0%</div><div class="t" style="left:1340px;top:241px;font-size:12px;line-height:20px;color:#333333;width:60px;text-align:right;">28</div><div class="t" style="left:0px;top:261px;font-size:12px;line-height:20px;color:#9a9a9a;width:90px;text-align:center;">100</div><svg class="r" style="left:94px;top:267px;" width="13" height="9" viewBox="0 0 13 9"><path d="M7 0.5H0.5v7h10" fill="none" stroke="#a9a9a9"/><path d="M1 2.2l2.3 2.4h2.3l0.8-0.9h5" fill="none" stroke="#a9a9a9"/><path d="M9.2 1.3l2.2 2.4-2.2 2.4" fill="none" stroke="#a9a9a9" stroke-width="1.3"/></svg><div class="t" style="left:112px;top:261px;font-size:12px;line-height:20px;color:#9a9a9a;transform:scaleX(0.967);transform-origin:0 0;">d.frazier@srcdomain.lan</div><svg class="r" style="left:294px;top:267px;" width="11" height="9" viewBox="0 0 11 9"><rect x="0.5" y="0.5" width="9" height="7" fill="none" stroke="#a9a9a9"/><path d="M1.2 1.5L3.5 4.5H6.5L8.8 1.5" fill="none" stroke="#a9a9a9"/></svg><div class="t" style="left:312px;top:261px;font-size:12px;line-height:20px;color:#9a9a9a;transform:scaleX(0.955);transform-origin:0 0;">Delores Frazier</div><svg class="r" style="left:497px;top:264px;" width="11" height="13" viewBox="0 0 11 13"><rect x="0.5" y="0.5" width="10" height="10" fill="none" stroke="#8b3b3b" stroke-width="1"/><rect x="2.5" y="2.5" width="6" height="2" fill="none" stroke="#8b3b3b" stroke-width="1.15"/><rect x="2.5" y="6.5" width="6" height="2" fill="none" stroke="#8b3b3b" stroke-width="1.15"/><path d="M1.5 11V12.6M9.5 11V12.6" stroke="#8b3b3b" stroke-width="1.2"/></svg><div class="t" style="left:516.5px;top:261px;font-size:12px;line-height:20px;color:#9a9a9a;transform:scaleX(0.955);transform-origin:0 0;">Archive</div><svg class="r" style="left:748px;top:266px;" width="10" height="9" viewBox="0 0 10 9"><path d="M0 2.5h8M0 5.5h8" stroke="#f3523f" stroke-width="1.1"/><path d="M8 0.3L0.5 8.2" stroke="#f3523f" stroke-width="1.1"/></svg><div class="t" style="left:765.3px;top:261px;font-size:12px;line-height:20px;color:#9a9a9a;">Click to match target</div><div class="r" style="left:940px;top:259px;width:200px;height:20px;overflow:hidden"><svg class="r" style="left:6px;top:6px;" width="13" height="13" viewBox="0 0 13 13"><circle cx="6" cy="6" r="5.2" fill="none" stroke="#2d4654" stroke-width="1.2"/><path d="M2.4 2.4l7.2 7.2" stroke="#2d4654" stroke-width="1.2"/></svg><div class="t" style="left:26.5px;top:2px;font-size:12.2px;line-height:20px;color:#9a9a9a;white-space:nowrap;">Don&#x27;t migrate</div></div><div class="r" style="left:1140px;top:259px;width:200px;height:20px;display:flex;justify-content:center;align-items:center"><svg width="13" height="13" viewBox="0 0 13 13" style="margin-right:4px;margin-top:2px"><circle cx="6.5" cy="6.5" r="5.5" fill="none" stroke="#333" stroke-width="1.1"/><rect x="4.5" y="4.5" width="4" height="4" fill="#333"/></svg><span style="font-size:12px;color:#9a9a9a;line-height:20px;padding-top:4px">Not started</span></div><div class="t" style="left:1340px;top:261px;font-size:12px;line-height:20px;color:#9a9a9a;width:60px;text-align:right;">0</div><div class="t" style="left:0px;top:281px;font-size:12px;line-height:20px;color:#333333;width:90px;text-align:center;">100</div><svg class="r" style="left:94px;top:287px;" width="13" height="9" viewBox="0 0 13 9"><path d="M7 0.5H0.5v7h10" fill="none" stroke="#a9a9a9"/><path d="M1 2.2l2.3 2.4h2.3l0.8-0.9h5" fill="none" stroke="#a9a9a9"/><path d="M9.2 1.3l2.2 2.4-2.2 2.4" fill="none" stroke="#a9a9a9" stroke-width="1.3"/></svg><div class="t" style="left:112px;top:281px;font-size:12px;line-height:20px;color:#333333;transform:scaleX(0.967);transform-origin:0 0;">h.olson@srcdomain.lan</div><svg class="r" style="left:294px;top:287px;" width="11" height="9" viewBox="0 0 11 9"><rect x="0.5" y="0.5" width="9" height="7" fill="none" stroke="#a9a9a9"/><path d="M1.2 1.5L3.5 4.5H6.5L8.8 1.5" fill="none" stroke="#a9a9a9"/></svg><div class="t" style="left:312px;top:281px;font-size:12px;line-height:20px;color:#333333;transform:scaleX(0.955);transform-origin:0 0;">Howard Olson</div><svg class="r" style="left:498px;top:287px;" width="11" height="9" viewBox="0 0 11 9"><rect x="0.5" y="0.5" width="9" height="7" fill="none" stroke="#a9a9a9"/><path d="M1.2 1.5L3.5 4.5H6.5L8.8 1.5" fill="none" stroke="#a9a9a9"/></svg><div class="t" style="left:516.5px;top:281px;font-size:12px;line-height:20px;color:#333333;transform:scaleX(0.955);transform-origin:0 0;">Primary</div><svg class="r" style="left:623px;top:287px;" width="11" height="9" viewBox="0 0 11 9"><rect x="0.5" y="0.5" width="9" height="7" fill="none" stroke="#a9a9a9"/><path d="M1.2 1.5L3.5 4.5H6.5L8.8 1.5" fill="none" stroke="#a9a9a9"/></svg><div class="t" style="left:641.5px;top:281px;font-size:12px;line-height:20px;color:#333333;transform:scaleX(0.955);transform-origin:0 0;">Primary</div><svg class="r" style="left:745px;top:285px;" width="14" height="10" viewBox="0 0 14 10"><path d="M1.3 5.5L4.8 8L12.3 1.3" fill="none" stroke="#92c213" stroke-width="1.6" stroke-linecap="round" stroke-linejoin="round"/></svg><div class="t" style="left:765.3px;top:281px;font-size:12px;line-height:20px;color:#333333;transform:scaleX(0.962);transform-origin:0 0;">H.Olson@c2example.com</div><div class="r" style="left:940px;top:279px;width:200px;height:20px;overflow:hidden"><svg class="r" style="left:5px;top:6px;" width="16" height="12" viewBox="0 0 16 12"><circle cx="5" cy="2.4" r="2.3" fill="#2d4654"/><path d="M0.8 9.8c0-2.7 1.6-4.3 4.2-4.3s4.2 1.6 4.2 4.3z" fill="#2d4654"/><path d="M10.2 8.6H14.8M12.5 6.3V10.9" stroke="#2d4654" stroke-width="1.1"/></svg><div class="t" style="left:26.5px;top:2px;font-size:12.2px;line-height:20px;color:#333333;white-space:nowrap;">Create new user with mailbox and</div></div><div class="r" style="left:1140px;top:279px;width:200px;height:20px;display:flex;justify-content:center;align-items:center"><svg width="13" height="13" viewBox="0 0 13 13" style="margin-right:4px;margin-top:2px"><circle cx="6.5" cy="6.5" r="5.5" fill="none" stroke="#333" stroke-width="1.1"/><rect x="4.5" y="4.5" width="4" height="4" fill="#333"/></svg><span style="font-size:12px;color:#333333;line-height:20px;padding-top:4px">Mailbox created</span></div><div class="t" style="left:1340px;top:281px;font-size:12px;line-height:20px;color:#333333;width:60px;text-align:right;">28</div><div class="t" style="left:0px;top:301px;font-size:12px;line-height:20px;color:#9a9a9a;width:90px;text-align:center;">100</div><svg class="r" style="left:94px;top:307px;" width="13" height="9" viewBox="0 0 13 9"><path d="M7 0.5H0.5v7h10" fill="none" stroke="#a9a9a9"/><path d="M1 2.2l2.3 2.4h2.3l0.8-0.9h5" fill="none" stroke="#a9a9a9"/><path d="M9.2 1.3l2.2 2.4-2.2 2.4" fill="none" stroke="#a9a9a9" stroke-width="1.3"/></svg><div class="t" style="left:112px;top:301px;font-size:12px;line-height:20px;color:#9a9a9a;transform:scaleX(0.967);transform-origin:0 0;">h.olson@srcdomain.lan</div><svg class="r" style="left:294px;top:307px;" width="11" height="9" viewBox="0 0 11 9"><rect x="0.5" y="0.5" width="9" height="7" fill="none" stroke="#a9a9a9"/><path d="M1.2 1.5L3.5 4.5H6.5L8.8 1.5" fill="none" stroke="#a9a9a9"/></svg><div class="t" style="left:312px;top:301px;font-size:12px;line-height:20px;color:#9a9a9a;transform:scaleX(0.955);transform-origin:0 0;">Howard Olson</div><svg class="r" style="left:497px;top:304px;" width="11" height="13" viewBox="0 0 11 13"><rect x="0.5" y="0.5" width="10" height="10" fill="none" stroke="#8b3b3b" stroke-width="1"/><rect x="2.5" y="2.5" width="6" height="2" fill="none" stroke="#8b3b3b" stroke-width="1.15"/><rect x="2.5" y="6.5" width="6" height="2" fill="none" stroke="#8b3b3b" stroke-width="1.15"/><path d="M1.5 11V12.6M9.5 11V12.6" stroke="#8b3b3b" stroke-width="1.2"/></svg><div class="t" style="left:516.5px;top:301px;font-size:12px;line-height:20px;color:#9a9a9a;transform:scaleX(0.955);transform-origin:0 0;">Archive</div><svg class="r" style="left:748px;top:306px;" width="10" height="9" viewBox="0 0 10 9"><path d="M0 2.5h8M0 5.5h8" stroke="#f3523f" stroke-width="1.1"/><path d="M8 0.3L0.5 8.2" stroke="#f3523f" stroke-width="1.1"/></svg><div class="t" style="left:765.3px;top:301px;font-size:12px;line-height:20px;color:#9a9a9a;">Click to match target</div><div class="r" style="left:940px;top:299px;width:200px;height:20px;overflow:hidden"><svg class="r" style="left:6px;top:6px;" width="13" height="13" viewBox="0 0 13 13"><circle cx="6" cy="6" r="5.2" fill="none" stroke="#2d4654" stroke-width="1.2"/><path d="M2.4 2.4l7.2 7.2" stroke="#2d4654" stroke-width="1.2"/></svg><div class="t" style="left:26.5px;top:2px;font-size:12.2px;line-height:20px;color:#9a9a9a;white-space:nowrap;">Don&#x27;t migrate</div></div><div class="r" style="left:1140px;top:299px;width:200px;height:20px;display:flex;justify-content:center;align-items:center"><svg width="13" height="13" viewBox="0 0 13 13" style="margin-right:4px;margin-top:2px"><circle cx="6.5" cy="6.5" r="5.5" fill="none" stroke="#333" stroke-width="1.1"/><rect x="4.5" y="4.5" width="4" height="4" fill="#333"/></svg><span style="font-size:12px;color:#9a9a9a;line-height:20px;padding-top:4px">Not started</span></div><div class="t" style="left:1340px;top:301px;font-size:12px;line-height:20px;color:#9a9a9a;width:60px;text-align:right;">0</div><div class="r" style="left:0px;top:319px;width:1443px;height:20px;background:#e8e9e7;"></div><div class="t" style="left:0px;top:321px;font-size:12px;line-height:20px;color:#333333;width:90px;text-align:center;">100</div><svg class="r" style="left:94px;top:327px;" width="13" height="9" viewBox="0 0 13 9"><path d="M7 0.5H0.5v7h10" fill="none" stroke="#a9a9a9"/><path d="M1 2.2l2.3 2.4h2.3l0.8-0.9h5" fill="none" stroke="#a9a9a9"/><path d="M9.2 1.3l2.2 2.4-2.2 2.4" fill="none" stroke="#a9a9a9" stroke-width="1.3"/></svg><div class="t" style="left:112px;top:321px;font-size:12px;line-height:20px;color:#333333;transform:scaleX(0.967);transform-origin:0 0;">j.crocus@srcdomain.lan</div><svg class="r" style="left:294px;top:327px;" width="11" height="9" viewBox="0 0 11 9"><rect x="0.5" y="0.5" width="9" height="7" fill="none" stroke="#a9a9a9"/><path d="M1.2 1.5L3.5 4.5H6.5L8.8 1.5" fill="none" stroke="#a9a9a9"/></svg><div class="t" style="left:312px;top:321px;font-size:12px;line-height:20px;color:#333333;transform:scaleX(0.955);transform-origin:0 0;">James Crocus</div><svg class="r" style="left:498px;top:327px;" width="11" height="9" viewBox="0 0 11 9"><rect x="0.5" y="0.5" width="9" height="7" fill="none" stroke="#a9a9a9"/><path d="M1.2 1.5L3.5 4.5H6.5L8.8 1.5" fill="none" stroke="#a9a9a9"/></svg><div class="t" style="left:516.5px;top:321px;font-size:12px;line-height:20px;color:#333333;transform:scaleX(0.955);transform-origin:0 0;">Primary</div><svg class="r" style="left:623px;top:327px;" width="11" height="9" viewBox="0 0 11 9"><rect x="0.5" y="0.5" width="9" height="7" fill="none" stroke="#a9a9a9"/><path d="M1.2 1.5L3.5 4.5H6.5L8.8 1.5" fill="none" stroke="#a9a9a9"/></svg><div class="t" style="left:641.5px;top:321px;font-size:12px;line-height:20px;color:#333333;transform:scaleX(0.955);transform-origin:0 0;">Primary</div><svg class="r" style="left:745px;top:325px;" width="14" height="10" viewBox="0 0 14 10"><path d="M1.3 5.5L4.8 8L12.3 1.3" fill="none" stroke="#92c213" stroke-width="1.6" stroke-linecap="round" stroke-linejoin="round"/></svg><div class="t" style="left:765.3px;top:321px;font-size:12px;line-height:20px;color:#333333;transform:scaleX(0.962);transform-origin:0 0;">j.crocus@c2example.com</div><div class="r" style="left:940px;top:319px;width:200px;height:20px;overflow:hidden"><svg class="r" style="left:5px;top:6px;" width="13" height="12" viewBox="0 0 13 12"><path d="M6 3.5H11.6M9.4 1.3L11.6 3.5L9.4 5.7M1 8.5H6.6M4.4 6.3L6.6 8.5L4.4 10.7" fill="none" stroke="#2d4654" stroke-width="1.25" stroke-linecap="round" stroke-linejoin="round"/></svg><div class="t" style="left:26.5px;top:2px;font-size:12.2px;line-height:20px;color:#333333;white-space:nowrap;">Migrate to existing mailbox</div></div><div class="r" style="left:1146px;top:322px;width:189px;height:16px;background:#cdcdcd;"></div><div class="t" style="left:1140px;top:321px;font-size:12px;line-height:20px;color:#222;width:200px;text-align:center;">0%</div><div class="t" style="left:1340px;top:321px;font-size:12px;line-height:20px;color:#333333;width:60px;text-align:right;">28</div><div class="t" style="left:0px;top:341px;font-size:12px;line-height:20px;color:#333333;width:90px;text-align:center;">100</div><svg class="r" style="left:94px;top:347px;" width="13" height="9" viewBox="0 0 13 9"><path d="M7 0.5H0.5v7h10" fill="none" stroke="#a9a9a9"/><path d="M1 2.2l2.3 2.4h2.3l0.8-0.9h5" fill="none" stroke="#a9a9a9"/><path d="M9.2 1.3l2.2 2.4-2.2 2.4" fill="none" stroke="#a9a9a9" stroke-width="1.3"/></svg><div class="t" style="left:112px;top:341px;font-size:12px;line-height:20px;color:#333333;transform:scaleX(0.967);transform-origin:0 0;">j.crocus@srcdomain.lan</div><svg class="r" style="left:294px;top:347px;" width="11" height="9" viewBox="0 0 11 9"><rect x="0.5" y="0.5" width="9" height="7" fill="none" stroke="#a9a9a9"/><path d="M1.2 1.5L3.5 4.5H6.5L8.8 1.5" fill="none" stroke="#a9a9a9"/></svg><div class="t" style="left:312px;top:341px;font-size:12px;line-height:20px;color:#333333;transform:scaleX(0.955);transform-origin:0 0;">James Crocus</div><svg class="r" style="left:497px;top:344px;" width="11" height="13" viewBox="0 0 11 13"><rect x="0.5" y="0.5" width="10" height="10" fill="none" stroke="#8b3b3b" stroke-width="1"/><rect x="2.5" y="2.5" width="6" height="2" fill="none" stroke="#8b3b3b" stroke-width="1.15"/><rect x="2.5" y="6.5" width="6" height="2" fill="none" stroke="#8b3b3b" stroke-width="1.15"/><path d="M1.5 11V12.6M9.5 11V12.6" stroke="#8b3b3b" stroke-width="1.2"/></svg><div class="t" style="left:516.5px;top:341px;font-size:12px;line-height:20px;color:#333333;transform:scaleX(0.955);transform-origin:0 0;">Archive</div><svg class="r" style="left:622px;top:344px;" width="11" height="13" viewBox="0 0 11 13"><rect x="0.5" y="0.5" width="10" height="10" fill="none" stroke="#8b3b3b" stroke-width="1"/><rect x="2.5" y="2.5" width="6" height="2" fill="none" stroke="#8b3b3b" stroke-width="1.15"/><rect x="2.5" y="6.5" width="6" height="2" fill="none" stroke="#8b3b3b" stroke-width="1.15"/><path d="M1.5 11V12.6M9.5 11V12.6" stroke="#8b3b3b" stroke-width="1.2"/></svg><div class="t" style="left:641.5px;top:341px;font-size:12px;line-height:20px;color:#333333;transform:scaleX(0.955);transform-origin:0 0;">Archive</div><svg class="r" style="left:745px;top:345px;" width="14" height="10" viewBox="0 0 14 10"><path d="M1.3 5.5L4.8 8L12.3 1.3" fill="none" stroke="#92c213" stroke-width="1.6" stroke-linecap="round" stroke-linejoin="round"/></svg><div class="t" style="left:765.3px;top:341px;font-size:12px;line-height:20px;color:#333333;transform:scaleX(0.962);transform-origin:0 0;">j.crocus@c2example.com</div><div class="r" style="left:940px;top:339px;width:200px;height:20px;overflow:hidden"><svg class="r" style="left:5px;top:6px;" width="13" height="12" viewBox="0 0 13 12"><path d="M6 3.5H11.6M9.4 1.3L11.6 3.5L9.4 5.7M1 8.5H6.6M4.4 6.3L6.6 8.5L4.4 10.7" fill="none" stroke="#2d4654" stroke-width="1.25" stroke-linecap="round" stroke-linejoin="round"/></svg><div class="t" style="left:26.5px;top:2px;font-size:12.2px;line-height:20px;color:#333333;white-space:nowrap;">Migrate to existing archive mailb</div></div><div class="r" style="left:1140px;top:339px;width:200px;height:20px;display:flex;justify-content:center;align-items:center"><svg width="13" height="13" viewBox="0 0 13 13" style="margin-right:4px;margin-top:2px"><circle cx="6.5" cy="6.5" r="5.5" fill="none" stroke="#333" stroke-width="1.1"/><rect x="4.5" y="4.5" width="4" height="4" fill="#333"/></svg><span style="font-size:12px;color:#333333;line-height:20px;padding-top:4px">Not started</span></div><div class="t" style="left:1340px;top:341px;font-size:12px;line-height:20px;color:#333333;width:60px;text-align:right;">0</div><div class="t" style="left:0px;top:361px;font-size:12px;line-height:20px;color:#333333;width:90px;text-align:center;">100</div><svg class="r" style="left:94px;top:367px;" width="13" height="9" viewBox="0 0 13 9"><path d="M7 0.5H0.5v7h10" fill="none" stroke="#a9a9a9"/><path d="M1 2.2l2.3 2.4h2.3l0.8-0.9h5" fill="none" stroke="#a9a9a9"/><path d="M9.2 1.3l2.2 2.4-2.2 2.4" fill="none" stroke="#a9a9a9" stroke-width="1.3"/></svg><div class="t" style="left:112px;top:361px;font-size:12px;line-height:20px;color:#333333;transform:scaleX(0.967);transform-origin:0 0;">j.farmer@srcdomain.lan</div><svg class="r" style="left:294px;top:367px;" width="11" height="9" viewBox="0 0 11 9"><rect x="0.5" y="0.5" width="9" height="7" fill="none" stroke="#a9a9a9"/><path d="M1.2 1.5L3.5 4.5H6.5L8.8 1.5" fill="none" stroke="#a9a9a9"/></svg><div class="t" style="left:312px;top:361px;font-size:12px;line-height:20px;color:#333333;transform:scaleX(0.955);transform-origin:0 0;">Jacob Farmer</div><svg class="r" style="left:498px;top:367px;" width="11" height="9" viewBox="0 0 11 9"><rect x="0.5" y="0.5" width="9" height="7" fill="none" stroke="#a9a9a9"/><path d="M1.2 1.5L3.5 4.5H6.5L8.8 1.5" fill="none" stroke="#a9a9a9"/></svg><div class="t" style="left:516.5px;top:361px;font-size:12px;line-height:20px;color:#333333;transform:scaleX(0.955);transform-origin:0 0;">Primary</div><svg class="r" style="left:623px;top:367px;" width="11" height="9" viewBox="0 0 11 9"><rect x="0.5" y="0.5" width="9" height="7" fill="none" stroke="#a9a9a9"/><path d="M1.2 1.5L3.5 4.5H6.5L8.8 1.5" fill="none" stroke="#a9a9a9"/></svg><div class="t" style="left:641.5px;top:361px;font-size:12px;line-height:20px;color:#333333;transform:scaleX(0.955);transform-origin:0 0;">Primary</div><svg class="r" style="left:745px;top:365px;" width="14" height="10" viewBox="0 0 14 10"><path d="M1.3 5.5L4.8 8L12.3 1.3" fill="none" stroke="#92c213" stroke-width="1.6" stroke-linecap="round" stroke-linejoin="round"/></svg><div class="t" style="left:765.3px;top:361px;font-size:12px;line-height:20px;color:#333333;transform:scaleX(0.962);transform-origin:0 0;">j.farmer@c2example.com</div><div class="r" style="left:940px;top:359px;width:200px;height:20px;overflow:hidden"><svg class="r" style="left:5px;top:6px;" width="13" height="12" viewBox="0 0 13 12"><path d="M6 3.5H11.6M9.4 1.3L11.6 3.5L9.4 5.7M1 8.5H6.6M4.4 6.3L6.6 8.5L4.4 10.7" fill="none" stroke="#2d4654" stroke-width="1.25" stroke-linecap="round" stroke-linejoin="round"/></svg><div class="t" style="left:26.5px;top:2px;font-size:12.2px;line-height:20px;color:#333333;white-space:nowrap;">Migrate to existing mailbox</div></div><div class="r" style="left:1140px;top:359px;width:200px;height:20px;display:flex;justify-content:center;align-items:center"><svg width="13" height="13" viewBox="0 0 13 13" style="margin-right:4px;margin-top:2px"><circle cx="6.5" cy="6.5" r="5.5" fill="none" stroke="#333" stroke-width="1.1"/><rect x="4.5" y="4.5" width="4" height="4" fill="#333"/></svg><span style="font-size:12px;color:#333333;line-height:20px;padding-top:4px">Not started</span></div><div class="t" style="left:1340px;top:361px;font-size:12px;line-height:20px;color:#333333;width:60px;text-align:right;">28</div><div class="t" style="left:0px;top:381px;font-size:12px;line-height:20px;color:#333333;width:90px;text-align:center;">100</div><svg class="r" style="left:94px;top:387px;" width="13" height="9" viewBox="0 0 13 9"><path d="M7 0.5H0.5v7h10" fill="none" stroke="#a9a9a9"/><path d="M1 2.2l2.3 2.4h2.3l0.8-0.9h5" fill="none" stroke="#a9a9a9"/><path d="M9.2 1.3l2.2 2.4-2.2 2.4" fill="none" stroke="#a9a9a9" stroke-width="1.3"/></svg><div class="t" style="left:112px;top:381px;font-size:12px;line-height:20px;color:#333333;transform:scaleX(0.967);transform-origin:0 0;">j.farmer@srcdomain.lan</div><svg class="r" style="left:294px;top:387px;" width="11" height="9" viewBox="0 0 11 9"><rect x="0.5" y="0.5" width="9" height="7" fill="none" stroke="#a9a9a9"/><path d="M1.2 1.5L3.5 4.5H6.5L8.8 1.5" fill="none" stroke="#a9a9a9"/></svg><div class="t" style="left:312px;top:381px;font-size:12px;line-height:20px;color:#333333;transform:scaleX(0.955);transform-origin:0 0;">Jacob Farmer</div><svg class="r" style="left:497px;top:384px;" width="11" height="13" viewBox="0 0 11 13"><rect x="0.5" y="0.5" width="10" height="10" fill="none" stroke="#8b3b3b" stroke-width="1"/><rect x="2.5" y="2.5" width="6" height="2" fill="none" stroke="#8b3b3b" stroke-width="1.15"/><rect x="2.5" y="6.5" width="6" height="2" fill="none" stroke="#8b3b3b" stroke-width="1.15"/><path d="M1.5 11V12.6M9.5 11V12.6" stroke="#8b3b3b" stroke-width="1.2"/></svg><div class="t" style="left:516.5px;top:381px;font-size:12px;line-height:20px;color:#333333;transform:scaleX(0.955);transform-origin:0 0;">Archive</div><svg class="r" style="left:622px;top:384px;" width="11" height="13" viewBox="0 0 11 13"><rect x="0.5" y="0.5" width="10" height="10" fill="none" stroke="#8b3b3b" stroke-width="1"/><rect x="2.5" y="2.5" width="6" height="2" fill="none" stroke="#8b3b3b" stroke-width="1.15"/><rect x="2.5" y="6.5" width="6" height="2" fill="none" stroke="#8b3b3b" stroke-width="1.15"/><path d="M1.5 11V12.6M9.5 11V12.6" stroke="#8b3b3b" stroke-width="1.2"/></svg><div class="t" style="left:641.5px;top:381px;font-size:12px;line-height:20px;color:#333333;transform:scaleX(0.955);transform-origin:0 0;">Archive</div><svg class="r" style="left:745px;top:385px;" width="14" height="10" viewBox="0 0 14 10"><path d="M1.3 5.5L4.8 8L12.3 1.3" fill="none" stroke="#92c213" stroke-width="1.6" stroke-linecap="round" stroke-linejoin="round"/></svg><div class="t" style="left:765.3px;top:381px;font-size:12px;line-height:20px;color:#333333;transform:scaleX(0.962);transform-origin:0 0;">j.farmer@c2example.com</div><div class="r" style="left:940px;top:379px;width:200px;height:20px;overflow:hidden"><svg class="r" style="left:5px;top:6px;" width="13" height="12" viewBox="0 0 13 12"><path d="M6 3.5H11.6M9.4 1.3L11.6 3.5L9.4 5.7M1 8.5H6.6M4.4 6.3L6.6 8.5L4.4 10.7" fill="none" stroke="#2d4654" stroke-width="1.25" stroke-linecap="round" stroke-linejoin="round"/></svg><div class="t" style="left:26.5px;top:2px;font-size:12.2px;line-height:20px;color:#333333;white-space:nowrap;">Migrate to existing archive mailb</div></div><div class="r" style="left:1140px;top:379px;width:200px;height:20px;display:flex;justify-content:center;align-items:center"><svg width="13" height="13" viewBox="0 0 13 13" style="margin-right:4px;margin-top:2px"><circle cx="6.5" cy="6.5" r="5.7" fill="none" stroke="#8ac11d" stroke-width="1.15"/><path d="M3.6 6.6l2.1 2.1 3.9-4.2" fill="none" stroke="#8ac11d" stroke-width="1.1"/></svg><span style="font-size:12px;color:#86bc1e;line-height:20px;padding-top:4px">Finished (nothing to migrate)</span></div><div class="t" style="left:1340px;top:381px;font-size:12px;line-height:20px;color:#333333;width:60px;text-align:right;">0</div><div class="t" style="left:0px;top:401px;font-size:12px;line-height:20px;color:#333333;width:90px;text-align:center;">100</div><svg class="r" style="left:94px;top:407px;" width="13" height="9" viewBox="0 0 13 9"><path d="M7 0.5H0.5v7h10" fill="none" stroke="#a9a9a9"/><path d="M1 2.2l2.3 2.4h2.3l0.8-0.9h5" fill="none" stroke="#a9a9a9"/><path d="M9.2 1.3l2.2 2.4-2.2 2.4" fill="none" stroke="#a9a9a9" stroke-width="1.3"/></svg><div class="t" style="left:112px;top:401px;font-size:12px;line-height:20px;color:#333333;transform:scaleX(0.967);transform-origin:0 0;">k.james@srcdomain.lan</div><svg class="r" style="left:294px;top:407px;" width="11" height="9" viewBox="0 0 11 9"><rect x="0.5" y="0.5" width="9" height="7" fill="none" stroke="#a9a9a9"/><path d="M1.2 1.5L3.5 4.5H6.5L8.8 1.5" fill="none" stroke="#a9a9a9"/></svg><div class="t" style="left:312px;top:401px;font-size:12px;line-height:20px;color:#333333;transform:scaleX(0.955);transform-origin:0 0;">Kristy James</div><svg class="r" style="left:498px;top:407px;" width="11" height="9" viewBox="0 0 11 9"><rect x="0.5" y="0.5" width="9" height="7" fill="none" stroke="#a9a9a9"/><path d="M1.2 1.5L3.5 4.5H6.5L8.8 1.5" fill="none" stroke="#a9a9a9"/></svg><div class="t" style="left:516.5px;top:401px;font-size:12px;line-height:20px;color:#333333;transform:scaleX(0.955);transform-origin:0 0;">Primary</div><svg class="r" style="left:623px;top:407px;" width="11" height="9" viewBox="0 0 11 9"><rect x="0.5" y="0.5" width="9" height="7" fill="none" stroke="#a9a9a9"/><path d="M1.2 1.5L3.5 4.5H6.5L8.8 1.5" fill="none" stroke="#a9a9a9"/></svg><div class="t" style="left:641.5px;top:401px;font-size:12px;line-height:20px;color:#333333;transform:scaleX(0.955);transform-origin:0 0;">Primary</div><svg class="r" style="left:745px;top:405px;" width="14" height="10" viewBox="0 0 14 10"><path d="M1.3 5.5L4.8 8L12.3 1.3" fill="none" stroke="#92c213" stroke-width="1.6" stroke-linecap="round" stroke-linejoin="round"/></svg><div class="t" style="left:765.3px;top:401px;font-size:12px;line-height:20px;color:#333333;transform:scaleX(0.962);transform-origin:0 0;">k.james@c2example.com</div><div class="r" style="left:940px;top:399px;width:200px;height:20px;overflow:hidden"><svg class="r" style="left:5px;top:6px;" width="13" height="12" viewBox="0 0 13 12"><path d="M6 3.5H11.6M9.4 1.3L11.6 3.5L9.4 5.7M1 8.5H6.6M4.4 6.3L6.6 8.5L4.4 10.7" fill="none" stroke="#2d4654" stroke-width="1.25" stroke-linecap="round" stroke-linejoin="round"/></svg><div class="t" style="left:26.5px;top:2px;font-size:12.2px;line-height:20px;color:#333333;white-space:nowrap;">Migrate to existing mailbox</div></div><div class="r" style="left:1140px;top:399px;width:200px;height:20px;display:flex;justify-content:center;align-items:center"><svg width="13" height="13" viewBox="0 0 13 13" style="margin-right:4px;margin-top:2px"><circle cx="6.5" cy="6.5" r="5.5" fill="none" stroke="#333" stroke-width="1.1"/><rect x="4.5" y="4.5" width="4" height="4" fill="#333"/></svg><span style="font-size:12px;color:#333333;line-height:20px;padding-top:4px">Not started</span></div><div class="t" style="left:1340px;top:401px;font-size:12px;line-height:20px;color:#333333;width:60px;text-align:right;">28</div><div class="t" style="left:0px;top:421px;font-size:12px;line-height:20px;color:#333333;width:90px;text-align:center;">100</div><svg class="r" style="left:94px;top:427px;" width="13" height="9" viewBox="0 0 13 9"><path d="M7 0.5H0.5v7h10" fill="none" stroke="#a9a9a9"/><path d="M1 2.2l2.3 2.4h2.3l0.8-0.9h5" fill="none" stroke="#a9a9a9"/><path d="M9.2 1.3l2.2 2.4-2.2 2.4" fill="none" stroke="#a9a9a9" stroke-width="1.3"/></svg><div class="t" style="left:112px;top:421px;font-size:12px;line-height:20px;color:#333333;transform:scaleX(0.967);transform-origin:0 0;">k.james@srcdomain.lan</div><svg class="r" style="left:294px;top:427px;" width="11" height="9" viewBox="0 0 11 9"><rect x="0.5" y="0.5" width="9" height="7" fill="none" stroke="#a9a9a9"/><path d="M1.2 1.5L3.5 4.5H6.5L8.8 1.5" fill="none" stroke="#a9a9a9"/></svg><div class="t" style="left:312px;top:421px;font-size:12px;line-height:20px;color:#333333;transform:scaleX(0.955);transform-origin:0 0;">Kristy James</div><svg class="r" style="left:497px;top:424px;" width="11" height="13" viewBox="0 0 11 13"><rect x="0.5" y="0.5" width="10" height="10" fill="none" stroke="#8b3b3b" stroke-width="1"/><rect x="2.5" y="2.5" width="6" height="2" fill="none" stroke="#8b3b3b" stroke-width="1.15"/><rect x="2.5" y="6.5" width="6" height="2" fill="none" stroke="#8b3b3b" stroke-width="1.15"/><path d="M1.5 11V12.6M9.5 11V12.6" stroke="#8b3b3b" stroke-width="1.2"/></svg><div class="t" style="left:516.5px;top:421px;font-size:12px;line-height:20px;color:#333333;transform:scaleX(0.955);transform-origin:0 0;">Archive</div><svg class="r" style="left:622px;top:424px;" width="11" height="13" viewBox="0 0 11 13"><rect x="0.5" y="0.5" width="10" height="10" fill="none" stroke="#8b3b3b" stroke-width="1"/><rect x="2.5" y="2.5" width="6" height="2" fill="none" stroke="#8b3b3b" stroke-width="1.15"/><rect x="2.5" y="6.5" width="6" height="2" fill="none" stroke="#8b3b3b" stroke-width="1.15"/><path d="M1.5 11V12.6M9.5 11V12.6" stroke="#8b3b3b" stroke-width="1.2"/></svg><div class="t" style="left:641.5px;top:421px;font-size:12px;line-height:20px;color:#333333;transform:scaleX(0.955);transform-origin:0 0;">Archive</div><svg class="r" style="left:745px;top:425px;" width="14" height="10" viewBox="0 0 14 10"><path d="M1.3 5.5L4.8 8L12.3 1.3" fill="none" stroke="#92c213" stroke-width="1.6" stroke-linecap="round" stroke-linejoin="round"/></svg><div class="t" style="left:765.3px;top:421px;font-size:12px;line-height:20px;color:#333333;transform:scaleX(0.962);transform-origin:0 0;">k.james@c2example.com</div><div class="r" style="left:940px;top:419px;width:200px;height:20px;overflow:hidden"><svg class="r" style="left:5px;top:6px;" width="13" height="12" viewBox="0 0 13 12"><path d="M6 3.5H11.6M9.4 1.3L11.6 3.5L9.4 5.7M1 8.5H6.6M4.4 6.3L6.6 8.5L4.4 10.7" fill="none" stroke="#2d4654" stroke-width="1.25" stroke-linecap="round" stroke-linejoin="round"/></svg><div class="t" style="left:26.5px;top:2px;font-size:12.2px;line-height:20px;color:#333333;white-space:nowrap;">Migrate to existing archive mailb</div></div><div class="r" style="left:1140px;top:419px;width:200px;height:20px;display:flex;justify-content:center;align-items:center"><svg width="13" height="13" viewBox="0 0 13 13" style="margin-right:4px;margin-top:2px"><circle cx="6.5" cy="6.5" r="5.5" fill="none" stroke="#333" stroke-width="1.1"/><rect x="4.5" y="4.5" width="4" height="4" fill="#333"/></svg><span style="font-size:12px;color:#333333;line-height:20px;padding-top:4px">Not started</span></div><div class="t" style="left:1340px;top:421px;font-size:12px;line-height:20px;color:#333333;width:60px;text-align:right;">0</div><div class="r" style="left:90px;top:0px;width:1px;height:434px;background:#dadada;"></div><div class="r" style="left:290px;top:0px;width:1px;height:434px;background:#dadada;"></div><div class="r" style="left:490px;top:0px;width:1px;height:434px;background:#dadada;"></div><div class="r" style="left:615px;top:0px;width:1px;height:434px;background:#dadada;"></div><div class="r" style="left:740px;top:0px;width:1px;height:434px;background:#dadada;"></div><div class="r" style="left:940px;top:0px;width:1px;height:434px;background:#dadada;"></div><div class="r" style="left:1140px;top:0px;width:1px;height:434px;background:#dadada;"></div><div class="r" style="left:1340px;top:0px;width:1px;height:434px;background:#dadada;"></div><div class="r" style="left:1405px;top:0px;width:1px;height:434px;background:#dadada;"></div></div><div class="r" style="left:1681px;top:256px;width:16px;height:395px;background:#f7f7f7;"></div><svg class="r" style="left:1685px;top:263px;" width="7" height="4" viewBox="0 0 7 4"><path d="M0 3.6L3.5 0L7 3.6z" fill="#c6c6c6"/></svg><div class="r" style="left:1681px;top:272px;width:15px;height:301px;background:#d0d1cf;"></div><svg class="r" style="left:1685px;top:642px;" width="7" height="4" viewBox="0 0 7 4"><path d="M0 0.4L3.5 4L7 0.4z" fill="#c6c6c6"/></svg><div class="r" style="left:1681px;top:217px;width:16px;height:39px;background:#f7f8f6;"></div><div class="r" style="left:238px;top:651px;width:1443px;height:16px;background:#f7f7f7;"></div><svg class="r" style="left:243px;top:655px;" width="4" height="7" viewBox="0 0 4 7"><path d="M3.6 0L0 3.5L3.6 7z" fill="#c6c6c6"/></svg><div class="r" style="left:254px;top:652px;width:1110px;height:14px;background:#d0d1cf;"></div><svg class="r" style="left:1672px;top:655px;" width="4" height="7" viewBox="0 0 4 7"><path d="M0.4 0L4 3.5L0.4 7z" fill="#c6c6c6"/></svg><div class="r" style="left:1681px;top:651px;width:16px;height:16px;background:#f7f7f7;"></div><div class="r" style="left:237px;top:683px;width:485px;height:385px;background:#d5d7d5;"></div><div class="r" style="left:238px;top:684px;width:483px;height:383px;background:#ffffff;"></div><div class="r" style="left:238px;top:684px;width:483px;height:29px;background:#e8e9e7;"></div><div class="t" style="left:243px;top:689px;font-size:14px;line-height:20px;color:#333333;">Job migration progress</div><div class="t" style="left:243.3px;top:718px;font-size:12px;line-height:20px;color:#333333;">Migration status:</div><svg class="r" style="left:338px;top:720px;" width="14" height="14" viewBox="0 0 14 14"><circle cx="7" cy="7" r="5.5" fill="none" stroke="#8fc21b" stroke-width="1.1"/><path d="M5 3.9V9.9L9.6 6.9z" fill="#8fc21b"/></svg><div class="t" style="left:358.4px;top:718px;font-size:12px;line-height:20px;color:#333333;">In progress</div><div class="r" style="left:243px;top:749px;width:473px;height:15px;background:#cdcdcd;"></div><div class="t" style="left:243px;top:747px;font-size:12px;line-height:20px;color:#333333;width:473px;text-align:center;">0%</div><div class="r" style="left:243px;top:781px;width:473px;height:116px;background:#d6d6d6;"></div><div class="r" style="left:244px;top:782px;width:471px;height:27px;background:#f5f7f5;"></div><div class="r" style="left:244px;top:810px;width:471px;height:28px;background:#ffffff;"></div><div class="r" style="left:244px;top:839px;width:471px;height:28px;background:#f5f7f5;"></div><div class="r" style="left:244px;top:868px;width:471px;height:28px;background:#ffffff;"></div><div class="t" style="left:253.5px;top:786px;font-size:12px;line-height:20px;color:#333333;font-weight:bold;">Mailboxes:</div><div class="t" style="left:253.5px;top:844px;font-size:12px;line-height:20px;color:#333333;font-weight:bold;">Items:</div><div class="t" style="left:325px;top:786px;font-size:12px;line-height:20px;color:#333333;width:120px;text-align:center;">Total in job</div><div class="t" style="left:419px;top:786px;font-size:12px;line-height:20px;color:#333333;width:120px;text-align:center;">Migrated</div><div class="t" style="left:514px;top:786px;font-size:12px;line-height:20px;color:#333333;width:120px;text-align:center;">Left</div><div class="t" style="left:608px;top:786px;font-size:12px;line-height:20px;color:#333333;width:120px;text-align:center;">Don&#x27;t migrate</div><div class="t" style="left:325px;top:815px;font-size:12px;line-height:20px;color:#333333;width:120px;text-align:center;">23</div><div class="t" style="left:419px;top:815px;font-size:12px;line-height:20px;color:#333333;width:120px;text-align:center;">3</div><div class="t" style="left:514px;top:815px;font-size:12px;line-height:20px;color:#333333;width:120px;text-align:center;">11</div><div class="t" style="left:608px;top:815px;font-size:12px;line-height:20px;color:#333333;width:120px;text-align:center;">9</div><div class="t" style="left:325px;top:844px;font-size:12px;line-height:20px;color:#333333;width:120px;text-align:center;">Total</div><div class="t" style="left:419px;top:844px;font-size:12px;line-height:20px;color:#333333;width:120px;text-align:center;">Migrated</div><div class="t" style="left:514px;top:844px;font-size:12px;line-height:20px;color:#333333;width:120px;text-align:center;">Excluded</div><div class="t" style="left:608px;top:844px;font-size:12px;line-height:20px;color:#333333;width:120px;text-align:center;">Failed</div><div class="t" style="left:325px;top:873px;font-size:12px;line-height:20px;color:#333333;width:120px;text-align:center;">252</div><div class="t" style="left:419px;top:873px;font-size:12px;line-height:20px;color:#333333;width:120px;text-align:center;">9</div><div class="t" style="left:514px;top:873px;font-size:12px;line-height:20px;color:#333333;width:120px;text-align:center;">0</div><div class="t" style="left:608px;top:873px;font-size:12px;line-height:20px;color:#333333;width:120px;text-align:center;">0</div><div class="t" style="left:243px;top:911px;font-size:12px;line-height:20px;color:#333333;">Est. time left:</div><div class="t" style="left:338px;top:911px;font-size:12px;line-height:20px;color:#333333;">00:04 (d.hh:mm)</div><svg class="r" style="left:434px;top:913px;" width="15" height="15" viewBox="0 0 15 15"><circle cx="7.5" cy="7.5" r="6.4" fill="none" stroke="#666" stroke-width="1.3"/><rect x="6.8" y="6.3" width="1.5" height="5" fill="#555"/><rect x="6.8" y="3.6" width="1.5" height="1.5" fill="#555"/></svg><div class="t" style="left:243px;top:940px;font-size:12px;line-height:20px;color:#333333;">Speed:</div><div class="t" style="left:338px;top:940px;font-size:12px;line-height:20px;color:#333333;">40.0 KB/s</div><div class="t" style="left:243px;top:969px;font-size:12px;line-height:20px;color:#333333;">Start time:</div><div class="t" style="left:338px;top:969px;font-size:12px;line-height:20px;color:#333333;">5/26/2025 1:38:55 PM</div><div class="t" style="left:243px;top:999px;font-size:12px;line-height:20px;color:#1c6fbf;">Job migration report...</div><div class="t" style="left:560px;top:999px;font-size:12px;line-height:20px;color:#1c6fbf;width:151px;text-align:right;">Log files...</div><div class="r" style="left:737px;top:683px;width:311px;height:385px;background:#d5d7d5;"></div><div class="r" style="left:738px;top:684px;width:309px;height:383px;background:#ffffff;"></div><div class="r" style="left:738px;top:684px;width:309px;height:29px;background:#e8e9e7;"></div><div class="t" style="left:743px;top:689px;font-size:14px;line-height:20px;color:#333333;">Job good news</div><div class="r" style="left:839px;top:690px;width:44px;height:15px;background:#9bc31a;border-radius:2px;color:#fff;font-size:10px;line-height:15px;text-align:center">24 of 24</div><svg class="r" style="left:1001px;top:691px;" width="14" height="14" viewBox="0 0 14 14"><path d="M0.4 0.6L5.4 5.6M5.4 0.6L0.4 5.6" stroke="#6b6b6b" stroke-width="1.15"/><path d="M7.2 2.5H13M7.2 4.5H13M7.2 6.5H13M0 8.5H13M0 10.5H13M0 12.5H13" stroke="#6b6b6b" stroke-width="1"/></svg><svg class="r" style="left:1027px;top:691px;" width="14" height="14" viewBox="0 0 14 14"><rect x="5.9" y="0" width="2.2" height="3.2" rx="0.6" fill="#6b6b6b" transform="rotate(0 7 7)"/><rect x="5.9" y="0" width="2.2" height="3.2" rx="0.6" fill="#6b6b6b" transform="rotate(45 7 7)"/><rect x="5.9" y="0" width="2.2" height="3.2" rx="0.6" fill="#6b6b6b" transform="rotate(90 7 7)"/><rect x="5.9" y="0" width="2.2" height="3.2" rx="0.6" fill="#6b6b6b" transform="rotate(135 7 7)"/><rect x="5.9" y="0" width="2.2" height="3.2" rx="0.6" fill="#6b6b6b" transform="rotate(180 7 7)"/><rect x="5.9" y="0" width="2.2" height="3.2" rx="0.6" fill="#6b6b6b" transform="rotate(225 7 7)"/><rect x="5.9" y="0" width="2.2" height="3.2" rx="0.6" fill="#6b6b6b" transform="rotate(270 7 7)"/><rect x="5.9" y="0" width="2.2" height="3.2" rx="0.6" fill="#6b6b6b" transform="rotate(315 7 7)"/><circle cx="7" cy="7" r="4.05" fill="none" stroke="#6b6b6b" stroke-width="2.1"/></svg><div class="r" style="left:738px;top:713px;width:294px;height:354px;overflow:hidden"><div class="t" style="left:9px;top:4px;font-size:11.7px;line-height:20px;color:#333333;">05-26 13:39</div><div class="t" style="left:81.20000000000005px;top:4px;font-size:12.2px;line-height:20px;color:#1c6fbf;white-space:nowrap;">Job &#x27;Migration&#x27; started migratin...</div><svg class="r" style="left:272px;top:9px;" width="8" height="8" viewBox="0 0 8 8"><path d="M0.8 0.8L7.2 7.2M7.2 0.8L0.8 7.2" stroke="#666" stroke-width="1.6"/></svg><div class="t" style="left:9px;top:30px;font-size:11.7px;line-height:20px;color:#333333;">05-26 13:39</div><div class="t" style="left:81.20000000000005px;top:30px;font-size:12.2px;line-height:20px;color:#1c6fbf;white-space:nowrap;">Job &#x27;Migration&#x27; finished migratin...</div><svg class="r" style="left:272px;top:35px;" width="8" height="8" viewBox="0 0 8 8"><path d="M0.8 0.8L7.2 7.2M7.2 0.8L0.8 7.2" stroke="#666" stroke-width="1.6"/></svg><div class="t" style="left:9px;top:56px;font-size:11.7px;line-height:20px;color:#333333;">05-26 13:38</div><div class="t" style="left:81.20000000000005px;top:56px;font-size:12.2px;line-height:20px;color:#1c6fbf;white-space:nowrap;">Job &#x27;Migration&#x27; started migratin...</div><svg class="r" style="left:272px;top:61px;" width="8" height="8" viewBox="0 0 8 8"><path d="M0.8 0.8L7.2 7.2M7.2 0.8L0.8 7.2" stroke="#666" stroke-width="1.6"/></svg><div class="t" style="left:9px;top:82px;font-size:11.7px;line-height:20px;color:#333333;">05-26 13:38</div><div class="t" style="left:81.20000000000005px;top:82px;font-size:12.2px;line-height:20px;color:#1c6fbf;white-space:nowrap;">Job &#x27;Migration&#x27; started migratin...</div><svg class="r" style="left:272px;top:87px;" width="8" height="8" viewBox="0 0 8 8"><path d="M0.8 0.8L7.2 7.2M7.2 0.8L0.8 7.2" stroke="#666" stroke-width="1.6"/></svg><div class="t" style="left:9px;top:108px;font-size:11.7px;line-height:20px;color:#333333;">05-26 13:38</div><div class="t" style="left:81.20000000000005px;top:108px;font-size:12.2px;line-height:20px;color:#1c6fbf;white-space:nowrap;">Job &#x27;Migration&#x27; started migratin...</div><svg class="r" style="left:272px;top:113px;" width="8" height="8" viewBox="0 0 8 8"><path d="M0.8 0.8L7.2 7.2M7.2 0.8L0.8 7.2" stroke="#666" stroke-width="1.6"/></svg><div class="t" style="left:9px;top:134px;font-size:11.7px;line-height:20px;color:#333333;">05-26 13:38</div><div class="t" style="left:81.20000000000005px;top:134px;font-size:12.2px;line-height:20px;color:#1c6fbf;white-space:nowrap;">Job &#x27;Migration&#x27; started migratin...</div><svg class="r" style="left:272px;top:139px;" width="8" height="8" viewBox="0 0 8 8"><path d="M0.8 0.8L7.2 7.2M7.2 0.8L0.8 7.2" stroke="#666" stroke-width="1.6"/></svg><div class="t" style="left:9px;top:160px;font-size:11.7px;line-height:20px;color:#333333;">05-26 13:38</div><div class="t" style="left:81.20000000000005px;top:160px;font-size:12.2px;line-height:20px;color:#1c6fbf;white-space:nowrap;">Job &#x27;Migration&#x27; started migratin...</div><svg class="r" style="left:272px;top:165px;" width="8" height="8" viewBox="0 0 8 8"><path d="M0.8 0.8L7.2 7.2M7.2 0.8L0.8 7.2" stroke="#666" stroke-width="1.6"/></svg><div class="t" style="left:9px;top:186px;font-size:11.7px;line-height:20px;color:#333333;">05-26 13:38</div><div class="t" style="left:81.20000000000005px;top:186px;font-size:12.2px;line-height:20px;color:#1c6fbf;white-space:nowrap;">Migration job &#x27;Migration&#x27; started</div><svg class="r" style="left:272px;top:191px;" width="8" height="8" viewBox="0 0 8 8"><path d="M0.8 0.8L7.2 7.2M7.2 0.8L0.8 7.2" stroke="#666" stroke-width="1.6"/></svg><div class="t" style="left:9px;top:212px;font-size:11.7px;line-height:20px;color:#333333;">05-26 13:38</div><div class="t" style="left:81.20000000000005px;top:212px;font-size:12.2px;line-height:20px;color:#1c6fbf;white-space:nowrap;">Job &#x27;Migration&#x27; stopped migrati...</div><svg class="r" style="left:272px;top:217px;" width="8" height="8" viewBox="0 0 8 8"><path d="M0.8 0.8L7.2 7.2M7.2 0.8L0.8 7.2" stroke="#666" stroke-width="1.6"/></svg><div class="t" style="left:9px;top:238px;font-size:11.7px;line-height:20px;color:#333333;">05-26 13:38</div><div class="t" style="left:81.20000000000005px;top:238px;font-size:12.2px;line-height:20px;color:#1c6fbf;white-space:nowrap;">Job &#x27;Migration&#x27; stopped migrati...</div><svg class="r" style="left:272px;top:243px;" width="8" height="8" viewBox="0 0 8 8"><path d="M0.8 0.8L7.2 7.2M7.2 0.8L0.8 7.2" stroke="#666" stroke-width="1.6"/></svg><div class="t" style="left:9px;top:264px;font-size:11.7px;line-height:20px;color:#333333;">05-26 13:38</div><div class="t" style="left:81.20000000000005px;top:264px;font-size:12.2px;line-height:20px;color:#1c6fbf;white-space:nowrap;">Job &#x27;Migration&#x27; stopped migrati...</div><svg class="r" style="left:272px;top:269px;" width="8" height="8" viewBox="0 0 8 8"><path d="M0.8 0.8L7.2 7.2M7.2 0.8L0.8 7.2" stroke="#666" stroke-width="1.6"/></svg><div class="t" style="left:9px;top:290px;font-size:11.7px;line-height:20px;color:#333333;">05-26 13:38</div><div class="t" style="left:81.20000000000005px;top:290px;font-size:12.2px;line-height:20px;color:#1c6fbf;white-space:nowrap;">Job &#x27;Migration&#x27; stopped migrati...</div><svg class="r" style="left:272px;top:295px;" width="8" height="8" viewBox="0 0 8 8"><path d="M0.8 0.8L7.2 7.2M7.2 0.8L0.8 7.2" stroke="#666" stroke-width="1.6"/></svg><div class="t" style="left:9px;top:316px;font-size:11.7px;line-height:20px;color:#333333;">05-26 13:38</div><div class="t" style="left:81.20000000000005px;top:316px;font-size:12.2px;line-height:20px;color:#1c6fbf;white-space:nowrap;">Job &#x27;Migration&#x27; stopped migrati...</div><svg class="r" style="left:272px;top:321px;" width="8" height="8" viewBox="0 0 8 8"><path d="M0.8 0.8L7.2 7.2M7.2 0.8L0.8 7.2" stroke="#666" stroke-width="1.6"/></svg><div class="t" style="left:9px;top:342px;font-size:11.7px;line-height:20px;color:#333333;">05-26 13:38</div><div class="t" style="left:81.20000000000005px;top:342px;font-size:12.2px;line-height:20px;color:#1c6fbf;white-space:nowrap;">Migration job &#x27;Migration&#x27; was pa...</div><svg class="r" style="left:272px;top:347px;" width="8" height="8" viewBox="0 0 8 8"><path d="M0.8 0.8L7.2 7.2M7.2 0.8L0.8 7.2" stroke="#666" stroke-width="1.6"/></svg></div><div class="r" style="left:1032px;top:713px;width:15px;height:354px;background:#f7f7f7;"></div><svg class="r" style="left:1036px;top:719px;" width="7" height="4" viewBox="0 0 7 4"><path d="M0 3.6L3.5 0L7 3.6z" fill="#c6c6c6"/></svg><div class="r" style="left:1032px;top:728px;width:15px;height:184px;background:#d0d1cf;"></div><svg class="r" style="left:1036px;top:1057px;" width="7" height="4" viewBox="0 0 7 4"><path d="M0 0.4L3.5 4L7 0.4z" fill="#c6c6c6"/></svg><div class="r" style="left:1063px;top:683px;width:278px;height:385px;background:#d5d7d5;"></div><div class="r" style="left:1064px;top:684px;width:276px;height:383px;background:#ffffff;"></div><div class="r" style="left:1064px;top:684px;width:276px;height:29px;background:#e8e9e7;"></div><div class="t" style="left:1069px;top:689px;font-size:14px;line-height:20px;color:#333333;">Job bad news</div><svg class="r" style="left:1293px;top:691px;" width="14" height="14" viewBox="0 0 14 14"><path d="M0.4 0.6L5.4 5.6M5.4 0.6L0.4 5.6" stroke="#6b6b6b" stroke-width="1.15"/><path d="M7.2 2.5H13M7.2 4.5H13M7.2 6.5H13M0 8.5H13M0 10.5H13M0 12.5H13" stroke="#6b6b6b" stroke-width="1"/></svg><svg class="r" style="left:1320px;top:691px;" width="14" height="14" viewBox="0 0 14 14"><rect x="5.9" y="0" width="2.2" height="3.2" rx="0.6" fill="#6b6b6b" transform="rotate(0 7 7)"/><rect x="5.9" y="0" width="2.2" height="3.2" rx="0.6" fill="#6b6b6b" transform="rotate(45 7 7)"/><rect x="5.9" y="0" width="2.2" height="3.2" rx="0.6" fill="#6b6b6b" transform="rotate(90 7 7)"/><rect x="5.9" y="0" width="2.2" height="3.2" rx="0.6" fill="#6b6b6b" transform="rotate(135 7 7)"/><rect x="5.9" y="0" width="2.2" height="3.2" rx="0.6" fill="#6b6b6b" transform="rotate(180 7 7)"/><rect x="5.9" y="0" width="2.2" height="3.2" rx="0.6" fill="#6b6b6b" transform="rotate(225 7 7)"/><rect x="5.9" y="0" width="2.2" height="3.2" rx="0.6" fill="#6b6b6b" transform="rotate(270 7 7)"/><rect x="5.9" y="0" width="2.2" height="3.2" rx="0.6" fill="#6b6b6b" transform="rotate(315 7 7)"/><circle cx="7" cy="7" r="4.05" fill="none" stroke="#6b6b6b" stroke-width="2.1"/></svg><div class="t" style="left:1069px;top:722px;font-size:12.2px;line-height:20px;color:#333333;">Nothing to show here.</div><div class="r" style="left:1356px;top:683px;width:342px;height:385px;background:#d5d7d5;"></div><div class="r" style="left:1357px;top:684px;width:340px;height:383px;background:#ffffff;"></div><div class="r" style="left:1357px;top:684px;width:340px;height:29px;background:#e8e9e7;"></div><div class="t" style="left:1362px;top:689px;font-size:14px;line-height:20px;color:#333333;">Job summary</div><div class="t" style="left:1362px;top:723px;font-size:11.4px;line-height:20px;color:#333333;">Job name:</div><div class="t" style="left:1448px;top:723px;font-size:11.8px;line-height:20px;color:#333333;white-space:nowrap;">Migration</div><div class="t" style="left:1362px;top:752px;font-size:11.4px;line-height:20px;color:#333333;">Source server:</div><div class="t" style="left:1448px;top:752px;font-size:11.8px;line-height:20px;color:#333333;white-space:nowrap;">Autodiscover (c2admin@srcdomain.lan)</div><div class="t" style="left:1362px;top:781px;font-size:11.4px;line-height:20px;color:#333333;">Target server:</div><div class="t" style="left:1448px;top:781px;font-size:11.8px;line-height:20px;color:#333333;white-space:nowrap;">admin@c2example.com</div><div class="t" style="left:1362px;top:810px;font-size:11.4px;line-height:20px;color:#333333;">Mailboxes:</div><div class="t" style="left:1448px;top:810px;font-size:11.8px;line-height:20px;color:#333333;white-space:nowrap;">Public Folders and AD user srcdomain.lan/U...</div><div class="t" style="left:1362px;top:839px;font-size:11.4px;line-height:20px;color:#333333;">Scheduler:</div><div class="t" style="left:1448px;top:839px;font-size:11.8px;line-height:20px;color:#333333;white-space:nowrap;">Not enabled</div><div class="t" style="left:1362px;top:868px;font-size:11.4px;line-height:20px;color:#333333;">Mailbox types:</div><div class="t" style="left:1448px;top:868px;font-size:11.8px;line-height:20px;color:#333333;white-space:nowrap;">Primary and archive mailboxes</div><div class="t" style="left:1362px;top:897px;font-size:11.4px;line-height:20px;color:#333333;">Job type:</div><div class="t" style="left:1448px;top:897px;font-size:11.8px;line-height:20px;color:#333333;white-space:nowrap;">Full migration (manual start)</div><div class="t" style="left:1362px;top:926px;font-size:11.4px;line-height:20px;color:#333333;">Time filter:</div><div class="t" style="left:1448px;top:926px;font-size:11.8px;line-height:20px;color:#333333;white-space:nowrap;">Migrate all items regardless of their age</div><div class="t" style="left:1362px;top:955px;font-size:11.4px;line-height:20px;color:#333333;">Advanced:</div><div class="t" style="left:1448px;top:955px;font-size:11.8px;line-height:20px;color:#333333;white-space:nowrap;">Concurrent mailboxes: 5; Max item size: 150...</div>
</body></html>
